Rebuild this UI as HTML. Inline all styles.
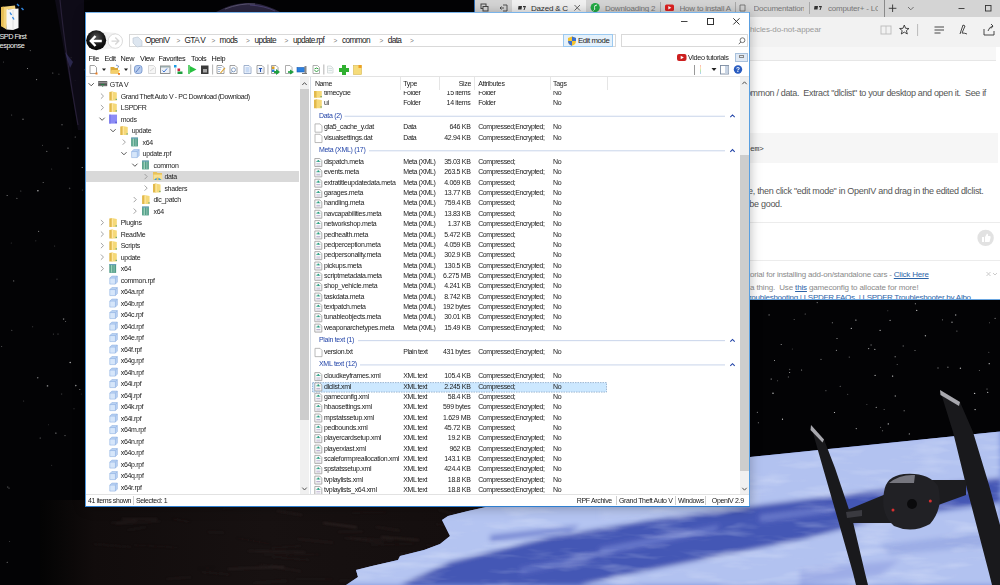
<!DOCTYPE html><html><head><meta charset="utf-8"><style>
html,body{margin:0;padding:0;width:1000px;height:585px;overflow:hidden;background:#030305;}
.t{position:absolute;white-space:nowrap;font-family:"Liberation Sans",sans-serif;}
svg{position:absolute;left:0;top:0;}
</style></head><body>
<svg width="1000" height="585" viewBox="0 0 1000 585">
<defs>
<linearGradient id="earth" x1="0" y1="0" x2="0.3" y2="1">
<stop offset="0" stop-color="#8a9ddc"/><stop offset="0.35" stop-color="#6f84cc"/><stop offset="1" stop-color="#8fa2df"/>
</linearGradient>
<filter id="bl" x="-20%" y="-20%" width="140%" height="140%"><feGaussianBlur stdDeviation="2.5"/></filter>
<filter id="turb" x="0" y="0" width="100%" height="100%"><feTurbulence type="fractalNoise" baseFrequency="0.02 0.1" numOctaves="3" seed="4"/><feColorMatrix type="matrix" values="0 0 0 0 0.9  0 0 0 0 0.93  0 0 0 0 1  0 0 0 2.2 -1.05"/></filter>
<filter id="bl2" x="-20%" y="-20%" width="140%" height="140%"><feGaussianBlur stdDeviation="1.2"/></filter>
</defs>
<rect width="1000" height="585" fill="#030305"/>
<circle cx="832.3" cy="322.8" r="0.5" fill="#fff" opacity="0.66"/><circle cx="955.7" cy="315.0" r="0.7" fill="#fff" opacity="0.62"/><circle cx="805.2" cy="313.9" r="0.5" fill="#fff" opacity="0.53"/><circle cx="774.5" cy="360.6" r="0.5" fill="#fff" opacity="0.75"/><circle cx="987.0" cy="389.0" r="0.5" fill="#fff" opacity="0.62"/><circle cx="895.1" cy="356.7" r="0.5" fill="#fff" opacity="0.84"/><circle cx="890.1" cy="320.4" r="0.7" fill="#fff" opacity="0.53"/><circle cx="781.2" cy="344.6" r="0.5" fill="#fff" opacity="0.75"/><circle cx="777.6" cy="380.8" r="0.5" fill="#fff" opacity="0.40"/><circle cx="887.8" cy="310.7" r="0.5" fill="#fff" opacity="0.33"/><circle cx="875.1" cy="375.4" r="0.6" fill="#fff" opacity="0.73"/><circle cx="897.2" cy="364.5" r="0.5" fill="#fff" opacity="0.46"/><circle cx="925.4" cy="335.7" r="0.7" fill="#fff" opacity="0.62"/><circle cx="874.8" cy="349.4" r="0.7" fill="#fff" opacity="0.55"/><circle cx="995.1" cy="318.3" r="0.6" fill="#fff" opacity="0.53"/><circle cx="789.7" cy="369.5" r="0.7" fill="#fff" opacity="0.32"/><circle cx="771.2" cy="379.0" r="0.6" fill="#fff" opacity="0.73"/><circle cx="836.4" cy="350.3" r="0.6" fill="#fff" opacity="0.57"/><circle cx="769.1" cy="314.9" r="0.7" fill="#fff" opacity="0.45"/><circle cx="916.7" cy="310.4" r="0.7" fill="#fff" opacity="0.69"/><circle cx="895.3" cy="396.0" r="0.7" fill="#fff" opacity="0.55"/><circle cx="847.7" cy="394.3" r="0.6" fill="#fff" opacity="0.31"/><circle cx="840.2" cy="386.3" r="0.5" fill="#fff" opacity="0.57"/><circle cx="942.5" cy="319.8" r="0.6" fill="#fff" opacity="0.44"/><circle cx="979.4" cy="370.5" r="0.6" fill="#fff" opacity="0.39"/><circle cx="888.3" cy="423.9" r="0.7" fill="#fff" opacity="0.75"/><circle cx="821.0" cy="359.3" r="0.6" fill="#fff" opacity="0.50"/><circle cx="989.5" cy="322.8" r="0.5" fill="#fff" opacity="0.40"/><circle cx="915.3" cy="303.7" r="0.5" fill="#fff" opacity="0.76"/><circle cx="817.2" cy="302.6" r="0.6" fill="#fff" opacity="0.53"/><circle cx="903.2" cy="346.0" r="0.7" fill="#fff" opacity="0.37"/><circle cx="987.7" cy="392.4" r="0.6" fill="#fff" opacity="0.71"/><circle cx="975.1" cy="409.6" r="0.7" fill="#fff" opacity="0.78"/><circle cx="849.3" cy="357.1" r="0.7" fill="#fff" opacity="0.36"/><circle cx="851.3" cy="328.3" r="0.6" fill="#fff" opacity="0.84"/><circle cx="792.3" cy="348.9" r="0.5" fill="#fff" opacity="0.33"/><circle cx="892.6" cy="376.1" r="0.7" fill="#fff" opacity="0.82"/><circle cx="758.3" cy="422.7" r="0.5" fill="#fff" opacity="0.64"/><circle cx="909.3" cy="433.9" r="0.6" fill="#fff" opacity="0.63"/><circle cx="782.5" cy="419.2" r="0.6" fill="#fff" opacity="0.85"/><circle cx="871.1" cy="345.0" r="0.7" fill="#fff" opacity="0.38"/><circle cx="837.0" cy="338.5" r="0.5" fill="#fff" opacity="0.76"/><circle cx="880.1" cy="330.3" r="0.6" fill="#fff" opacity="0.82"/><circle cx="788.4" cy="377.0" r="0.7" fill="#fff" opacity="0.31"/><circle cx="825.9" cy="390.7" r="0.6" fill="#fff" opacity="0.35"/><circle cx="880.6" cy="427.3" r="0.5" fill="#fff" opacity="0.50"/><circle cx="884.1" cy="409.5" r="0.5" fill="#fff" opacity="0.48"/><circle cx="904.1" cy="410.8" r="0.5" fill="#fff" opacity="0.72"/><circle cx="951.9" cy="414.9" r="0.5" fill="#fff" opacity="0.71"/><circle cx="801.6" cy="370.0" r="0.5" fill="#fff" opacity="0.70"/><circle cx="947.9" cy="367.2" r="0.7" fill="#fff" opacity="0.41"/><circle cx="989.2" cy="363.7" r="0.6" fill="#fff" opacity="0.82"/><circle cx="988.8" cy="352.3" r="0.5" fill="#fff" opacity="0.42"/><circle cx="868.6" cy="348.6" r="0.7" fill="#fff" opacity="0.57"/><circle cx="960.4" cy="368.2" r="0.7" fill="#fff" opacity="0.66"/><circle cx="773.0" cy="393.2" r="0.7" fill="#fff" opacity="0.80"/><circle cx="938.0" cy="368.0" r="0.7" fill="#fff" opacity="0.40"/><circle cx="834.5" cy="412.5" r="0.6" fill="#fff" opacity="0.83"/><circle cx="866.9" cy="404.6" r="0.5" fill="#fff" opacity="0.35"/><circle cx="794.2" cy="319.5" r="0.6" fill="#fff" opacity="0.38"/><circle cx="952.0" cy="322.2" r="0.6" fill="#fff" opacity="0.75"/><circle cx="915.0" cy="350.4" r="0.5" fill="#fff" opacity="0.60"/><circle cx="757.3" cy="412.3" r="0.5" fill="#fff" opacity="0.70"/><circle cx="882.6" cy="430.8" r="0.5" fill="#fff" opacity="0.54"/><circle cx="956.9" cy="331.1" r="0.6" fill="#fff" opacity="0.44"/><circle cx="876.3" cy="407.4" r="0.7" fill="#fff" opacity="0.48"/><circle cx="855.9" cy="320.1" r="0.6" fill="#fff" opacity="0.80"/><circle cx="974.6" cy="393.4" r="0.7" fill="#fff" opacity="0.75"/><circle cx="856.3" cy="428.6" r="0.7" fill="#fff" opacity="0.58"/><circle cx="789.7" cy="372.5" r="0.5" fill="#fff" opacity="0.78"/><circle cx="51.7" cy="465.2" r="0.5" fill="#fff" opacity="0.23"/><circle cx="40.2" cy="438.0" r="0.6" fill="#fff" opacity="0.46"/><circle cx="58.0" cy="333.9" r="0.5" fill="#fff" opacity="0.42"/><circle cx="75.1" cy="80.4" r="0.5" fill="#fff" opacity="0.26"/><circle cx="65.6" cy="321.6" r="0.5" fill="#fff" opacity="0.46"/><circle cx="37.7" cy="377.7" r="0.8" fill="#fff" opacity="0.43"/><circle cx="16.9" cy="198.3" r="0.6" fill="#fff" opacity="0.43"/><circle cx="43.2" cy="182.5" r="0.6" fill="#fff" opacity="0.44"/><circle cx="78.4" cy="527.6" r="0.6" fill="#fff" opacity="0.26"/><circle cx="11.7" cy="115.1" r="0.5" fill="#fff" opacity="0.39"/><circle cx="57.0" cy="279.2" r="0.6" fill="#fff" opacity="0.27"/><circle cx="66.6" cy="529.9" r="0.8" fill="#fff" opacity="0.23"/><circle cx="54.7" cy="245.9" r="0.5" fill="#fff" opacity="0.29"/><circle cx="82.2" cy="167.5" r="0.6" fill="#fff" opacity="0.67"/><circle cx="75.2" cy="137.1" r="0.5" fill="#fff" opacity="0.52"/><circle cx="13.7" cy="280.9" r="0.6" fill="#fff" opacity="0.43"/><circle cx="35.8" cy="240.8" r="0.6" fill="#fff" opacity="0.20"/><circle cx="1.7" cy="346.4" r="0.5" fill="#fff" opacity="0.39"/><circle cx="32.7" cy="326.8" r="0.5" fill="#fff" opacity="0.31"/><circle cx="9.6" cy="541.4" r="0.5" fill="#fff" opacity="0.28"/><circle cx="7.1" cy="195.5" r="0.5" fill="#fff" opacity="0.65"/><circle cx="23.0" cy="119.3" r="0.8" fill="#fff" opacity="0.38"/><circle cx="69.6" cy="188.4" r="0.8" fill="#fff" opacity="0.23"/><circle cx="48.5" cy="424.7" r="0.5" fill="#fff" opacity="0.20"/><circle cx="68.0" cy="148.1" r="0.6" fill="#fff" opacity="0.64"/><circle cx="79.8" cy="389.4" r="0.5" fill="#fff" opacity="0.59"/><circle cx="51.7" cy="169.0" r="0.5" fill="#fff" opacity="0.30"/><circle cx="38.6" cy="231.4" r="0.6" fill="#fff" opacity="0.45"/><circle cx="52.8" cy="73.1" r="0.5" fill="#fff" opacity="0.54"/><circle cx="82.4" cy="190.1" r="0.6" fill="#fff" opacity="0.25"/><circle cx="53.4" cy="334.1" r="0.6" fill="#fff" opacity="0.26"/><circle cx="42.5" cy="145.2" r="0.5" fill="#fff" opacity="0.34"/><circle cx="84.5" cy="69.8" r="0.8" fill="#fff" opacity="0.16"/><circle cx="46.8" cy="151.4" r="0.6" fill="#fff" opacity="0.41"/><circle cx="9.0" cy="488.1" r="0.6" fill="#fff" opacity="0.39"/><circle cx="46.4" cy="525.5" r="0.6" fill="#fff" opacity="0.68"/><circle cx="58.5" cy="575.6" r="0.8" fill="#fff" opacity="0.34"/><circle cx="62.0" cy="124.7" r="0.5" fill="#fff" opacity="0.69"/><circle cx="71.1" cy="57.6" r="0.6" fill="#fff" opacity="0.49"/><circle cx="36.6" cy="79.6" r="0.6" fill="#fff" opacity="0.52"/><circle cx="74.0" cy="408.7" r="0.5" fill="#fff" opacity="0.31"/><circle cx="58.9" cy="74.2" r="0.6" fill="#fff" opacity="0.25"/><circle cx="37.9" cy="190.8" r="0.8" fill="#fff" opacity="0.68"/><circle cx="27.5" cy="68.4" r="0.5" fill="#fff" opacity="0.64"/><circle cx="30.3" cy="50.6" r="0.6" fill="#fff" opacity="0.36"/><circle cx="23.7" cy="401.0" r="0.5" fill="#fff" opacity="0.29"/><circle cx="7.7" cy="487.1" r="0.8" fill="#fff" opacity="0.23"/><circle cx="3.5" cy="62.0" r="0.5" fill="#fff" opacity="0.32"/><circle cx="7.2" cy="562.3" r="0.5" fill="#fff" opacity="0.62"/><circle cx="55.9" cy="433.1" r="0.6" fill="#fff" opacity="0.63"/><circle cx="65.0" cy="435.6" r="0.6" fill="#fff" opacity="0.42"/><circle cx="61.6" cy="394.1" r="0.8" fill="#fff" opacity="0.17"/><circle cx="75.8" cy="385.6" r="0.8" fill="#fff" opacity="0.55"/><circle cx="11.8" cy="330.2" r="0.5" fill="#fff" opacity="0.43"/><circle cx="70.2" cy="362.5" r="0.8" fill="#fff" opacity="0.64"/><circle cx="81.3" cy="393.9" r="0.5" fill="#fff" opacity="0.20"/><circle cx="11.3" cy="243.0" r="0.6" fill="#fff" opacity="0.21"/><circle cx="47.5" cy="385.9" r="0.8" fill="#fff" opacity="0.49"/><circle cx="20.8" cy="191.1" r="0.5" fill="#fff" opacity="0.40"/><circle cx="63.6" cy="319.1" r="0.8" fill="#fff" opacity="0.44"/>
<path d="M55 0 C62 40 70 80 78 130 L84 130 L84 0 Z" fill="#120e1c" opacity="0.8"/>
<path d="M60 0 C64 40 70 80 78 125" stroke="#2e2640" stroke-width="1.2" fill="none" opacity="0.8"/>
<path d="M65 52 L73 62 L70 68 Z" fill="#3e3a70" opacity="0.6"/>
<path d="M216 12 Q230 4 245 3 Q262 2 280 12 Z" fill="#2c2640"/>
<path d="M225 9 Q240 3 255 4" stroke="#6a6480" stroke-width="1" fill="none" opacity="0.7"/>
<path d="M250 5 Q265 6 275 11" stroke="#5a5090" stroke-width="1" fill="none" opacity="0.6"/>
<linearGradient id="hull" x1="0" y1="0" x2="1" y2="0"><stop offset="0" stop-color="#030303"/><stop offset="0.12" stop-color="#110c0c"/><stop offset="0.5" stop-color="#171111"/><stop offset="1" stop-color="#140e0e"/></linearGradient>
<path d="M40 500 L490 500 L486 507 L468 511 L448 516 L442 520 L450 536 L440 544 L424 550 L400 556 L398 560 L372 566 L356 570 L358 577 L346 585 L40 585 Z" fill="url(#hull)"/>
<g filter="url(#bl2)" opacity="0.8"><path d="M248 551 l57 1.2" stroke="#443636" stroke-width="1.2" opacity="0.46"/><path d="M371 545 l43 -1.3" stroke="#3a2e2e" stroke-width="1.1" opacity="0.30"/><path d="M298 539 l35 3.7" stroke="#3a2e2e" stroke-width="1.4" opacity="0.47"/><path d="M111 523 l26 -2.7" stroke="#443636" stroke-width="1.2" opacity="0.40"/><path d="M272 557 l37 3.0" stroke="#3a2e2e" stroke-width="1.1" opacity="0.35"/><path d="M338 532 l25 -0.4" stroke="#4a3a38" stroke-width="0.7" opacity="0.52"/><path d="M128 530 l18 -2.8" stroke="#3a2e2e" stroke-width="1.4" opacity="0.32"/><path d="M254 583 l33 -2.3" stroke="#2e2626" stroke-width="1.4" opacity="0.52"/><path d="M208 532 l16 0.7" stroke="#3a2e2e" stroke-width="1.7" opacity="0.30"/><path d="M94 544 l37 3.1" stroke="#443636" stroke-width="0.8" opacity="0.43"/><path d="M237 538 l33 5.9" stroke="#2e2626" stroke-width="0.6" opacity="0.55"/><path d="M439 510 l23 6.0" stroke="#3a2e2e" stroke-width="1.3" opacity="0.45"/><path d="M436 524 l27 4.0" stroke="#3a2e2e" stroke-width="1.0" opacity="0.35"/><path d="M116 524 l44 -2.9" stroke="#443636" stroke-width="1.0" opacity="0.47"/><path d="M426 545 l41 4.8" stroke="#443636" stroke-width="0.8" opacity="0.30"/><path d="M376 527 l24 3.7" stroke="#4a3a38" stroke-width="1.7" opacity="0.32"/><path d="M399 554 l34 -2.1" stroke="#443636" stroke-width="0.6" opacity="0.59"/><path d="M349 538 l34 5.1" stroke="#3a2e2e" stroke-width="1.2" opacity="0.43"/><path d="M134 545 l44 2.5" stroke="#443636" stroke-width="0.7" opacity="0.32"/><path d="M352 513 l34 -0.8" stroke="#443636" stroke-width="0.7" opacity="0.35"/><path d="M122 519 l35 -0.0" stroke="#443636" stroke-width="1.5" opacity="0.43"/><path d="M296 579 l36 0.2" stroke="#3a2e2e" stroke-width="1.0" opacity="0.26"/><path d="M259 564 l29 6.0" stroke="#3a2e2e" stroke-width="0.7" opacity="0.44"/><path d="M405 565 l47 4.1" stroke="#4a3a38" stroke-width="1.7" opacity="0.37"/><path d="M405 575 l34 4.1" stroke="#4a3a38" stroke-width="1.6" opacity="0.45"/><path d="M223 509 l18 -2.2" stroke="#4a3a38" stroke-width="0.7" opacity="0.34"/><path d="M345 538 l48 2.2" stroke="#3a2e2e" stroke-width="1.1" opacity="0.54"/><path d="M272 548 l29 -2.2" stroke="#3a2e2e" stroke-width="0.6" opacity="0.59"/><path d="M264 555 l56 -0.7" stroke="#443636" stroke-width="0.6" opacity="0.36"/><path d="M271 566 l30 5.4" stroke="#4a3a38" stroke-width="1.2" opacity="0.33"/><path d="M323 523 l34 4.3" stroke="#4a3a38" stroke-width="1.7" opacity="0.56"/><path d="M167 579 l24 -1.8" stroke="#3a2e2e" stroke-width="1.0" opacity="0.56"/><path d="M339 581 l27 -1.5" stroke="#443636" stroke-width="1.1" opacity="0.35"/><path d="M381 537 l38 3.0" stroke="#4a3a38" stroke-width="1.5" opacity="0.54"/><path d="M202 572 l28 2.5" stroke="#2e2626" stroke-width="1.4" opacity="0.35"/><path d="M198 569 l16 -1.8" stroke="#2e2626" stroke-width="1.1" opacity="0.26"/><path d="M173 519 l17 2.7" stroke="#2e2626" stroke-width="1.1" opacity="0.47"/><path d="M425 561 l24 1.3" stroke="#4a3a38" stroke-width="0.8" opacity="0.25"/><path d="M277 511 l25 4.0" stroke="#443636" stroke-width="1.2" opacity="0.58"/><path d="M228 569 l56 -2.2" stroke="#443636" stroke-width="1.7" opacity="0.50"/></g>
<clipPath id="ec"><path d="M1000 431.5 L750 457 L480 492 L486 507 L468 511 L448 516 L442 520 L450 536 L440 544 L424 550 L400 556 L398 560 L372 566 L356 570 L358 577 L346 585 L1000 585 Z"/></clipPath>
<path d="M1000 431.5 L750 457 L480 492 L486 507 L468 511 L448 516 L442 520 L450 536 L440 544 L424 550 L400 556 L398 560 L372 566 L356 570 L358 577 L346 585 L1000 585 Z" fill="#7f94dc"/>
<g clip-path="url(#ec)"><g filter="url(#bl)">
<path d="M600 470 L1000 428 L1000 482 L760 505 L600 520 Z" fill="#b8c6f2" opacity="0.9"/>
<path d="M330 500 L760 490 L760 505 L650 520 L550 537 L450 562 L400 585 L330 585 Z" fill="#b8c8f2" opacity="0.92"/>
<path d="M400 585 L450 562 L550 537 L650 520 L760 505 L880 490 L1000 478 L1000 502 L880 518 L800 540 L650 570 L580 585 Z" fill="#4152b2" opacity="0.95"/>
<path d="M580 585 L650 570 L800 540 L880 520 L1000 504 L1000 585 Z" fill="#b8c6f2" opacity="0.9"/>
<path d="M490 535 L580 525 L570 532 L490 542 Z" fill="#6070c8" opacity="0.7"/><path d="M600 548 L720 525 L715 531 L600 555 Z" fill="#7888d4" opacity="0.7"/><path d="M520 568 L600 552 L595 558 L520 574 Z" fill="#7080d0" opacity="0.6"/>
<path d="M760 515 L840 505 L830 512 L760 522 Z" fill="#8090d8" opacity="0.6"/>
<path d="M880 545 L1000 530 L1000 545 L890 555 Z" fill="#90a0e0" opacity="0.6"/>
<path d="M800 570 L900 560 L880 575 L800 585 Z" fill="#8a9ade" opacity="0.5"/>
</g><rect x="340" y="425" width="660" height="160" filter="url(#turb)" opacity="0.3"/></g>
<!-- TIE fighter -->
<g>
<path d="M811 425 L815 440 L823 468 L838 520 L853 573 L856 585 L868 585 L865 573 L852.5 520 L835 468 L824 439.5 Z" fill="#19191c"/>
<path d="M811 425 L824 439.5 L822.5 442.5 L810.5 430 Z" fill="#a8a8ae"/>
<path d="M940 390 L953 432 L966 485 L989 573 L992 585 L1000 585 L1000 525 L989 485 L973 432 L960 402 Z" fill="#19191c"/>
<path d="M940 390 L960 402 L959 406 L940.5 395 Z" fill="#a8a8ae"/>
<path d="M847 510 L886 494 L892 523 L850 523 Z" fill="#1c1c1f"/><path d="M846 512 L862 510 L862 516 L847 518 Z" fill="#3a3a40"/>
<path d="M926 480 L966 480 L966 495 L930 508 Z" fill="#1c1c1f"/>
<path d="M884 492 Q886 476 904 474 Q928 472 938 486 Q944 508 930 524 Q912 534 894 526 Q880 514 884 492 Z" fill="#212125"/>
<path d="M889 483 Q900 474 915 475 L914 483 Z" fill="#76767e"/>
<circle cx="912" cy="504" r="5" fill="#0a0a0c"/>
<circle cx="893" cy="510" r="1.5" fill="#d83030"/>
<circle cx="930.3" cy="501" r="1.5" fill="#d83030"/>
</g>
</svg>
<svg width="30" height="32" style="left:0;top:0" viewBox="0 0 30 32">
<path d="M1 7 L15 5.5 L15.5 9 L8 9.5 L6.5 29.5 L1 26 Z" fill="#f2d27a"/>
<path d="M1 7 L4 6.7 L3.5 27.5 L1 26 Z" fill="#e6bd55"/>
<path d="M6.5 9.5 L18.5 8.5 L18.5 28 L13 30 L6.5 29.5 Z" fill="#f6f6f6"/>
<path d="M13 10 L13 30" stroke="#d8d8d8" stroke-width="0.8"/>
<path d="M10 12.5 L11.5 15 M12.5 17 L14 19.5" stroke="#2f86e0" stroke-width="1.4"/>
<path d="M17 4 L19 6 M21.5 8 L23.5 10" stroke="#2f86e0" stroke-width="1.5"/>
</svg>
<div class="t" style="left:-0.50px;top:32.91px;font-size:7.3px;line-height:8.76px;color:#f4f4f4;letter-spacing:-0.5px;text-shadow:0 0 2px #000;">SPD First</div>
<div class="t" style="left:-0.50px;top:41.71px;font-size:7.3px;line-height:8.76px;color:#f4f4f4;letter-spacing:-0.4px;text-shadow:0 0 2px #000;">esponse</div>
<div style="position:absolute;left:0;top:0;width:1000px;height:300px;overflow:hidden">
<div style="position:absolute;left:474.00px;top:0.00px;width:526.00px;height:300.00px;background:#ffffff;"></div>
<div style="position:absolute;left:474.00px;top:0.00px;width:1.00px;height:300.00px;background:#2f6fb8;"></div>
<div style="position:absolute;left:475.00px;top:0.00px;width:525.00px;height:16.50px;background:#d4d4d4;"></div>
<div style="position:absolute;left:512.00px;top:0.00px;width:74.00px;height:16.50px;background:#f0f0f0;"></div>
<div style="position:absolute;left:475.00px;top:16.50px;width:525.00px;height:30.50px;background:#f2f2f2;"></div>
<div style="position:absolute;left:750.00px;top:47.00px;width:246.00px;height:13.00px;background:#f7f7f7;border-bottom:1px solid #e6e6e6;"></div>
<div style="position:absolute;left:660.00px;top:2.00px;width:1.00px;height:12.00px;background:#a8a8a8;"></div>
<div style="position:absolute;left:735.00px;top:2.00px;width:1.00px;height:12.00px;background:#a8a8a8;"></div>
<div style="position:absolute;left:808.50px;top:2.00px;width:1.00px;height:12.00px;background:#a8a8a8;"></div>
<div style="position:absolute;left:883.50px;top:0.00px;width:1.00px;height:16.50px;background:#8a8a8a;"></div>
<div class="t" style="left:531.00px;top:3.72px;font-size:8px;line-height:9.60px;color:#333;letter-spacing:-0.2px;width:37px;overflow:hidden;">Dazed &amp; Co</div>
<div style="position:absolute;left:586.00px;top:0.00px;width:0.00px;height:0.00px;"></div>
<div class="t" style="left:605.00px;top:3.72px;font-size:8px;line-height:9.60px;color:#777;letter-spacing:-0.2px;">Downloading 2</div>
<div class="t" style="left:679.50px;top:3.72px;font-size:8px;line-height:9.60px;color:#777;letter-spacing:-0.2px;width:53px;overflow:hidden;">How to install A</div>
<div class="t" style="left:753.50px;top:3.72px;font-size:8px;line-height:9.60px;color:#777;letter-spacing:-0.2px;width:50px;overflow:hidden;">Documentation</div>
<div class="t" style="left:828.00px;top:3.72px;font-size:8px;line-height:9.60px;color:#777;letter-spacing:-0.2px;width:50px;overflow:hidden;">computer+ - LC</div>
<svg width="1000" height="20" viewBox="0 0 1000 20" style="left:0;top:0"><circle cx="595.2" cy="7.6" r="4.6" fill="#22aa44"/><path d="M597 5 Q594 5 594.5 7.5 Q595.5 9.5 593.5 10.5" stroke="#fff" stroke-width="0.9" fill="none"/><rect x="665" y="4.5" width="9" height="6.5" rx="1.5" fill="#dd2020"/><path d="M668.3 6 L671.3 7.75 L668.3 9.5 Z" fill="#fff"/><path d="M574.5 5 L580 10.5 M580 5 L574.5 10.5" stroke="#555" stroke-width="0.9"/><rect x="481" y="4" width="5" height="4.5" fill="none" stroke="#444" stroke-width="1"/><rect x="483" y="6.5" width="5" height="4.5" fill="#d6d6d6" stroke="#444" stroke-width="1"/><path d="M500 8 L504 8 M501.5 6.5 L500 8 L501.5 9.5 M503 5 L507 5 L507 11 L503 11" stroke="#444" stroke-width="0.9" fill="none"/><path d="M518.5 6 L522 6 L521.5 9.5 L518 9.5 Z M523 6 L526 6 L524.5 10 L523.5 10 L524.5 7.2 L523 7.2 Z" fill="#333"/><path d="M740 5 L745 5 L745 11 L740 11 Z" fill="none" stroke="#666" stroke-width="0.8"/><path d="M814.5 6 L818 6 L817.5 9.5 L814 9.5 Z M819 6 L822 6 L820.5 10 L819.5 10 L820.5 7.2 L819 7.2 Z" fill="#333"/><path d="M892.6 4.5 L892.6 12 M888.8 8.3 L896.4 8.3" stroke="#333" stroke-width="0.9"/><path d="M908 7 L910.8 9.8 L913.6 7" stroke="#555" stroke-width="0.8" fill="none"/><path d="M958.5 8.5 L964.5 8.5" stroke="#333" stroke-width="0.9"/><rect x="985.5" y="5.5" width="5.5" height="5.5" fill="none" stroke="#333" stroke-width="0.9"/></svg>
<div class="t" style="right:179.00px;top:25.42px;font-size:8px;line-height:9.60px;color:#9a9a9a;letter-spacing:-0.12px;text-align:right;">added-vehicles-do-not-appear</div>
<svg width="1000" height="50" viewBox="0 0 1000 50" style="left:0;top:0"><rect x="881" y="26" width="10" height="8" fill="none" stroke="#bbb" stroke-width="0.9"/><path d="M886 26 L886 34" stroke="#bbb" stroke-width="0.8"/><path d="M904.3 25 L905.6 28.3 L909 28.5 L906.4 30.6 L907.3 34 L904.3 32.1 L901.3 34 L902.2 30.6 L899.6 28.5 L903 28.3 Z" fill="none" stroke="#333" stroke-width="0.9"/><path d="M917.6 24 L917.6 36" stroke="#aaa" stroke-width="0.8"/><path d="M934.5 27 L944 27 M934.5 30 L944 30 M934.5 33 L940.5 33" stroke="#333" stroke-width="0.9"/><path d="M960 34 L963 25 L965 26 L962 33 Q965 33 967 34" stroke="#333" stroke-width="0.9" fill="none"/><path d="M984 29 L984 35 L994 35 L994 31 M988 31 Q989 27 993 26 L991 24 M993 26 L991 28.5" stroke="#333" stroke-width="0.9" fill="none"/></svg>
<div class="t" style="right:14.00px;top:88.16px;font-size:9px;line-height:10.80px;color:#555;letter-spacing:-0.34px;text-align:right;">update.rpf / common / data.&nbsp; Extract "dlclist" to your desktop and open it.&nbsp; See if</div>
<div style="position:absolute;left:750.00px;top:132.50px;width:248.00px;height:30.00px;background:#f6f6f6;"></div>
<div class="t" style="left:750.00px;top:143.52px;font-size:8px;line-height:9.60px;color:#444;letter-spacing:-0.3px;font-family:'Liberation Mono',monospace;">em&gt;</div>
<div class="t" style="right:16.50px;top:185.76px;font-size:9px;line-height:10.80px;color:#555;letter-spacing:-0.3px;text-align:right;">file, then click "edit mode" in OpenIV and drag in the edited dlclist.</div>
<div class="t" style="right:218.00px;top:198.96px;font-size:9px;line-height:10.80px;color:#555;letter-spacing:-0.3px;text-align:right;">should be good.</div>
<div style="position:absolute;left:750.00px;top:222.00px;width:250.00px;height:1.00px;background:#ececec;"></div>
<div style="position:absolute;left:750.00px;top:259.50px;width:250.00px;height:1.00px;background:#ececec;"></div>
<svg width="20" height="20" viewBox="0 0 20 20" style="left:976px;top:228px"><circle cx="9.6" cy="9.9" r="8.2" fill="#e2e2e2"/><path d="M6 9 L8 9 L8 14 L6 14 Z M9 9 L11 5.5 Q12.5 5.5 12 8 L14 8 Q15 8.5 14.5 10 L13.5 14 L9 14 Z" fill="#fff"/></svg>
<div class="t" style="right:71.30px;top:270.32px;font-size:8px;line-height:9.60px;color:#8a8a8a;letter-spacing:-0.2px;text-align:right;">Tutorial for installing add-on/standalone cars - <span style="color:#2d64a8;text-decoration:underline">Click Here</span></div>
<div class="t" style="right:81.50px;top:282.62px;font-size:8px;line-height:9.60px;color:#8a8a8a;letter-spacing:-0.15px;text-align:right;">is a thing.&nbsp; Use <span style="color:#2d64a8;text-decoration:underline">this</span> gameconfig to allocate for more!</div>
<div class="t" style="right:29.20px;top:293.02px;font-size:8px;line-height:9.60px;color:#2d64a8;letter-spacing:-0.25px;text-align:right;text-decoration:underline;">Troubleshooting | LSPDFR FAQs&nbsp; | LSPDFR Troubleshooter by Albo</div>
<svg width="20" height="12" viewBox="0 0 20 12" style="left:982px;top:268px"><path d="M4.5 4 L8.5 8 M8.5 4 L4.5 8" stroke="#ccc" stroke-width="1"/><path d="M11 5 L13 7 L15 5" stroke="#ccc" fill="none"/></svg>
<div style="position:absolute;left:474.00px;top:299.00px;width:526.00px;height:1.00px;background:#6aa6e0;"></div>
</div>
<div style="position:absolute;left:0;top:0;width:1000px;height:585px;">
<div style="position:absolute;left:85.00px;top:12.00px;width:665.00px;height:495.00px;background:#ffffff;box-shadow:0 1px 11px rgba(0,0,0,0.28);"></div>
<div style="position:absolute;left:85.00px;top:12.00px;width:665.00px;height:1.00px;background:#7ab4ea;"></div>
<div style="position:absolute;left:85.00px;top:12.00px;width:1.00px;height:495.00px;background:#4f98de;"></div>
<div style="position:absolute;left:749.00px;top:12.00px;width:1.00px;height:495.00px;background:#5a9fe0;"></div>
<div style="position:absolute;left:85.00px;top:506.00px;width:665.00px;height:1.00px;background:#2f7fd0;"></div>
<svg width="1000" height="60" viewBox="0 0 1000 60" style="left:0;top:0"><path d="M681 21.5 L687.5 21.5" stroke="#444" stroke-width="1"/><rect x="707.5" y="18.5" width="6" height="6" fill="none" stroke="#333" stroke-width="1"/><path d="M733.3 18.3 L739.5 24.5 M739.5 18.3 L733.3 24.5" stroke="#333" stroke-width="1"/><defs><radialGradient id="bk" cx="0.5" cy="0.35" r="0.7"><stop offset="0" stop-color="#555"/><stop offset="0.6" stop-color="#111"/><stop offset="1" stop-color="#000"/></radialGradient></defs><path d="M100 31.5 L116 33 L116 48 L100 50 Z" fill="#e8e8e8" opacity="0.6"/><circle cx="115.3" cy="41.1" r="7.2" fill="#fff" stroke="#d2d2d2" stroke-width="0.8"/><path d="M111.5 41.1 L118.5 41.1 M115.3 37.6 L118.8 41.1 L115.3 44.6" stroke="#d6d6d6" stroke-width="1.4" fill="none"/><circle cx="96.2" cy="40.3" r="10" fill="url(#bk)"/><path d="M90.8 41 L101.8 41 M95.5 36 L90.8 41 L95.5 46" stroke="#fff" stroke-width="2.4" fill="none"/></svg>
<div style="position:absolute;left:129.00px;top:34.00px;width:486.00px;height:12.00px;background:#fff;border:1px solid #d9d9d9;box-sizing:border-box;width:487px;height:13px;"></div>
<svg width="12" height="12" viewBox="0 0 12 12" style="left:132px;top:36px"><path d="M1 2 L6 1 L10 5 L10 10 L5 11 L1 7 Z" fill="#dde6f0" stroke="#b8c4d0" stroke-width="0.6"/></svg>
<div class="t" style="left:145.00px;top:36.15px;font-size:8.3px;line-height:9.96px;color:#222;letter-spacing:-0.62px;">OpenIV</div>
<div class="t" style="left:176.60px;top:37.16px;font-size:6.5px;line-height:7.80px;color:#777;letter-spacing:0px;">&gt;</div>
<div class="t" style="left:184.50px;top:36.15px;font-size:8.3px;line-height:9.96px;color:#222;letter-spacing:-0.62px;">GTA V</div>
<div class="t" style="left:211.40px;top:37.16px;font-size:6.5px;line-height:7.80px;color:#777;letter-spacing:0px;">&gt;</div>
<div class="t" style="left:219.60px;top:36.15px;font-size:8.3px;line-height:9.96px;color:#222;letter-spacing:-0.62px;">mods</div>
<div class="t" style="left:246.00px;top:37.16px;font-size:6.5px;line-height:7.80px;color:#777;letter-spacing:0px;">&gt;</div>
<div class="t" style="left:254.40px;top:36.15px;font-size:8.3px;line-height:9.96px;color:#222;letter-spacing:-0.62px;">update</div>
<div class="t" style="left:284.60px;top:37.16px;font-size:6.5px;line-height:7.80px;color:#777;letter-spacing:0px;">&gt;</div>
<div class="t" style="left:293.00px;top:36.15px;font-size:8.3px;line-height:9.96px;color:#222;letter-spacing:-0.62px;">update.rpf</div>
<div class="t" style="left:333.50px;top:37.16px;font-size:6.5px;line-height:7.80px;color:#777;letter-spacing:0px;">&gt;</div>
<div class="t" style="left:342.00px;top:36.15px;font-size:8.3px;line-height:9.96px;color:#222;letter-spacing:-0.62px;">common</div>
<div class="t" style="left:379.40px;top:37.16px;font-size:6.5px;line-height:7.80px;color:#777;letter-spacing:0px;">&gt;</div>
<div class="t" style="left:387.70px;top:36.15px;font-size:8.3px;line-height:9.96px;color:#222;letter-spacing:-0.62px;">data</div>
<div class="t" style="left:410.00px;top:37.16px;font-size:6.5px;line-height:7.80px;color:#777;letter-spacing:0px;">&gt;</div>
<div style="position:absolute;left:563.00px;top:34.00px;width:50.00px;height:12.00px;background:#e5f1fb;border:1px solid #9cc9ef;box-sizing:border-box;height:12.5px;"></div>
<svg width="10" height="10" viewBox="0 0 10 10" style="left:567px;top:35.5px"><path d="M5 0.5 L9 2 L9 5 Q9 8.5 5 9.8 Q1 8.5 1 5 L1 2 Z" fill="#f4c430"/><path d="M5 0.5 L9 2 L9 5 L5 5 Z" fill="#3a6fd0"/><path d="M1 5 L5 5 L5 9.8 Q1 8.5 1 5 Z" fill="#3a6fd0"/></svg>
<div class="t" style="left:578.00px;top:36.23px;font-size:7.8px;line-height:9.36px;color:#222;letter-spacing:-0.42px;">Edit mode</div>
<div style="position:absolute;left:621.00px;top:34.00px;width:127.00px;height:12.00px;background:#fff;border:1px solid #d9d9d9;box-sizing:border-box;height:12.5px;"></div>
<svg width="10" height="10" viewBox="0 0 10 10" style="left:737px;top:35.5px"><circle cx="5.5" cy="4.2" r="2.4" fill="none" stroke="#666" stroke-width="0.9"/><path d="M3.8 6 L1.8 8.2" stroke="#666" stroke-width="1"/></svg>
<div class="t" style="left:88.50px;top:54.71px;font-size:7.3px;line-height:8.76px;color:#111;letter-spacing:-0.35px;">File</div>
<div class="t" style="left:104.40px;top:54.71px;font-size:7.3px;line-height:8.76px;color:#111;letter-spacing:-0.35px;">Edit</div>
<div class="t" style="left:120.60px;top:54.71px;font-size:7.3px;line-height:8.76px;color:#111;letter-spacing:-0.35px;">New</div>
<div class="t" style="left:140.00px;top:54.71px;font-size:7.3px;line-height:8.76px;color:#111;letter-spacing:-0.35px;">View</div>
<div class="t" style="left:158.40px;top:54.71px;font-size:7.3px;line-height:8.76px;color:#111;letter-spacing:-0.35px;">Favorites</div>
<div class="t" style="left:191.10px;top:54.71px;font-size:7.3px;line-height:8.76px;color:#111;letter-spacing:-0.35px;">Tools</div>
<div class="t" style="left:211.50px;top:54.71px;font-size:7.3px;line-height:8.76px;color:#111;letter-spacing:-0.35px;">Help</div>
<svg width="12" height="10" viewBox="0 0 12 10" style="left:677px;top:53px"><rect x="0" y="1" width="9.5" height="7" rx="2" fill="#cc1f1f"/><path d="M3.7 2.8 L6.8 4.5 L3.7 6.2 Z" fill="#fff"/></svg>
<div class="t" style="left:688.00px;top:53.51px;font-size:7.3px;line-height:8.76px;color:#222;letter-spacing:-0.38px;">Video tutorials</div>
<div style="position:absolute;left:735.00px;top:52.50px;width:13.00px;height:9.00px;background:#dfe9f5;border:1px solid #a7c0dc;box-sizing:border-box;"></div>
<div style="position:absolute;left:739.00px;top:55.00px;width:5.00px;height:3.00px;border:1px solid #888;box-sizing:border-box;"></div>
<div style="position:absolute;left:693.50px;top:64.50px;width:1.00px;height:10.00px;background:#999;"></div>
<div style="position:absolute;left:700.00px;top:65.00px;width:1.00px;height:9.00px;background:linear-gradient(#f66,#fc6,#6c6,#69f);opacity:0.5;"></div>
<svg width="50" height="12" viewBox="0 0 50 12" style="left:710px;top:64px"><path d="M1.5 4 L6.5 4 L4 7 Z" fill="#222"/><rect x="10.5" y="1.5" width="8" height="8.5" fill="#fff" stroke="#7a8aa0" stroke-width="0.9"/><rect x="15" y="2" width="3.5" height="7.5" fill="#c8d4e4"/><circle cx="28" cy="5.5" r="4.2" fill="#2a5cc0"/><text x="28" y="7.8" font-size="6.5" font-family="Liberation Sans" font-weight="bold" fill="#fff" text-anchor="middle">?</text></svg>
</div>
<svg width="1000" height="80" viewBox="0 0 1000 80" style="left:0;top:0"><g transform="translate(89.5,65)"><path d="M0.5 0.5 L5.0 0.5 L7.0 2.5 L7.0 8.5 L0.5 8.5 Z" fill="#fff" stroke="#8a8a8a" stroke-width="0.8"/><rect x="6" y="7.5" width="2" height="2" fill="#f08020"/></g><path d="M102 68.5 L106 68.5 L104 71 Z" fill="#222"/><path d="M110.5 67 L114 67 L115 68 L118 68 L118 73.5 L110.5 73.5 Z" fill="#d9a93a"/><path d="M111.5 70 L120 70 L118.5 73.5 L110.5 73.5 Z" fill="#f4cf6a"/><path d="M116 65 L119 66.5 L117.5 67.5" stroke="#5a7fc0" stroke-width="0.8" fill="none"/><rect x="118" y="73" width="2" height="1.8" fill="#f08020"/><path d="M124 68.5 L128 68.5 L126 71 Z" fill="#222"/><rect x="130.3" y="64.5" width="0.9" height="10" fill="#aaa"/><rect x="134.5" y="65.5" width="7.5" height="8" rx="2.5" fill="#b7cdf0" stroke="#6e8fc8" stroke-width="0.8"/><path d="M136 72 L140 67" stroke="#4a6ab0" stroke-width="0.8"/><g transform="translate(148,65)"><path d="M0.5 0.5 L5.5 0.5 L7.5 2.5 L7.5 8.5 L0.5 8.5 Z" fill="#f6f6f6" stroke="#d0d0d0" stroke-width="0.8"/><path d="M2 6 L6 3" stroke="#ccc" stroke-width="0.8"/></g><rect x="160.5" y="66" width="9.5" height="7.5" fill="#eef2f8" stroke="#777" stroke-width="0.8"/><rect x="160.5" y="66" width="9.5" height="1.5" fill="#9aa"/><path d="M162.5 70.5 L164 72 L167 68.5" stroke="#2a6ad0" stroke-width="0.9" fill="none"/><rect x="174" y="65" width="2.5" height="2.5" fill="#1a9ae0"/><rect x="175" y="68" width="1" height="6" fill="#ddd"/><rect x="177.5" y="68.5" width="2.6" height="2.6" fill="#d02040"/><rect x="177.5" y="71.5" width="5" height="2.5" fill="#20a040"/><path d="M188 65 L196.5 69.5 L188 74 Z" fill="#28c040"/><rect x="188" y="65" width="2" height="9" fill="#60d070"/><rect x="201" y="65.5" width="7.5" height="8.5" fill="#3a3a3a"/><rect x="203" y="69" width="4" height="3.5" fill="#eee" opacity="0.6"/><rect x="212.2" y="64.5" width="0.9" height="10" fill="#aaa"/><g transform="translate(216.5,65)"><path d="M0.5 0.5 L5.5 0.5 L7.5 2.5 L7.5 8.5 L0.5 8.5 Z" fill="#fff" stroke="#8a8a8a" stroke-width="0.8"/><path d="M1.5 2.5 L5 2.5 M1.5 4.5 L4 4.5 M1.5 6.5 L3.5 6.5" stroke="#7a9ac0" stroke-width="0.7"/><path d="M4 8 L8.5 3" stroke="#e0a020" stroke-width="1.1"/></g><g transform="translate(229.5,65)"><path d="M0.5 0.5 L5.5 0.5 L7.5 2.5 L7.5 8.5 L0.5 8.5 Z" fill="#fff" stroke="#8a8a8a" stroke-width="0.8"/><circle cx="4" cy="4.8" r="2" fill="none" stroke="#6a8ab8" stroke-width="0.8"/><path d="M2.5 6.5 L1 8" stroke="#6a8ab8" stroke-width="0.9"/></g><g transform="translate(243.5,65)"><path d="M0.5 0.5 L5.5 0.5 L7.5 2.5 L7.5 8.5 L0.5 8.5 Z" fill="#f4f8ff" stroke="#8aa0c0" stroke-width="0.8"/><rect x="2" y="2" width="4" height="5.5" fill="#c8daf4"/></g><g transform="translate(256.5,65)"><path d="M0.5 0.5 L5.5 0.5 L7.5 2.5 L7.5 8.5 L0.5 8.5 Z" fill="#fff" stroke="#8a8a8a" stroke-width="0.8"/><rect x="1.5" y="2.5" width="5" height="5" fill="#e4ecfa"/><path d="M2.5 3.5 L5.5 3.5 M4 3.5 L4 7" stroke="#2050b0" stroke-width="1"/></g><rect x="267.5" y="64.5" width="0.9" height="10" fill="#aaa"/><g transform="translate(271,65)"><path d="M0.5 0.5 L5.0 0.5 L7.0 2.5 L7.0 8.5 L0.5 8.5 Z" fill="#fff" stroke="#8a8a8a" stroke-width="0.8"/><rect x="1" y="1.5" width="2.5" height="2.5" fill="#e0a020"/><rect x="1" y="4.5" width="2.5" height="2.5" fill="#2a7ad0"/></g><path d="M276 69 L280 72 L276 75 Z" fill="#20a040"/><rect x="274" y="71" width="3" height="2" fill="#20a040"/><g transform="translate(285,65)"><path d="M0.5 0.5 L5.0 0.5 L7.0 2.5 L7.0 8.5 L0.5 8.5 Z" fill="#fff" stroke="#999" stroke-width="0.8"/></g><path d="M290 69.5 L294 72 L290 74.5 Z" fill="#20a040"/><rect x="288" y="71.2" width="3" height="1.6" fill="#20a040"/><rect x="297" y="67.5" width="7.5" height="4.5" fill="#2a80e0" stroke="#1a5ab0" stroke-width="0.6"/><rect x="304.5" y="66" width="2" height="8" fill="#8a8a8a"/><rect x="302" y="73" width="5" height="1" fill="#777"/><g transform="translate(312.5,65)"><path d="M0.5 0.5 L5.0 0.5 L7.0 2.5 L7.0 8.5 L0.5 8.5 Z" fill="#fff" stroke="#999" stroke-width="0.8"/><path d="M2 4 Q4 2 6 4 M6 5.5 Q4 7.5 2 5.5" stroke="#30a040" stroke-width="1" fill="none"/></g><rect x="323.4" y="64.5" width="0.9" height="10" fill="#aaa"/><g transform="translate(327,65.5)"><path d="M0.5 0.5 L4.0 0.5 L6.0 2.5 L6.0 7.5 L0.5 7.5 Z" fill="#f6f8f8" stroke="#cfd6d6" stroke-width="0.8"/><path d="M1.5 3 L5 3 M1.5 5 L5 5" stroke="#c8d8d8" stroke-width="0.7"/></g><path d="M342 65 L346 65 L346 68 L349 68 L349 72 L346 72 L346 75 L342 75 L342 72 L339 72 L339 68 L342 68 Z" fill="#30b030"/><rect x="353.5" y="65.5" width="8" height="9" fill="#f6dc7a" stroke="#d8b850" stroke-width="0.6"/><rect x="358.5" y="65" width="3" height="3" fill="#f0a020"/></svg>
<div style="position:absolute;left:86.00px;top:76.00px;width:663.00px;height:1.00px;background:#e3e3e3;"></div>
<div style="position:absolute;left:86.00px;top:171.00px;width:213.00px;height:11.20px;background:#d9d9d9;"></div>
<div class="t" style="left:109.80px;top:81.18px;font-size:7px;line-height:8.40px;color:#1a1a1a;letter-spacing:-0.3px;">GTA V</div>
<div class="t" style="left:120.72px;top:92.68px;font-size:7px;line-height:8.40px;color:#1a1a1a;letter-spacing:-0.41px;">Grand Theft Auto V - PC Download (Download)</div>
<div class="t" style="left:120.72px;top:104.18px;font-size:7px;line-height:8.40px;color:#1a1a1a;letter-spacing:-0.3px;">LSPDFR</div>
<div class="t" style="left:120.72px;top:115.68px;font-size:7px;line-height:8.40px;color:#1a1a1a;letter-spacing:-0.3px;">mods</div>
<div class="t" style="left:131.64px;top:127.18px;font-size:7px;line-height:8.40px;color:#1a1a1a;letter-spacing:-0.3px;">update</div>
<div class="t" style="left:142.56px;top:138.68px;font-size:7px;line-height:8.40px;color:#1a1a1a;letter-spacing:-0.3px;">x64</div>
<div class="t" style="left:142.56px;top:150.18px;font-size:7px;line-height:8.40px;color:#1a1a1a;letter-spacing:-0.3px;">update.rpf</div>
<div class="t" style="left:153.48px;top:161.68px;font-size:7px;line-height:8.40px;color:#1a1a1a;letter-spacing:-0.3px;">common</div>
<div class="t" style="left:164.40px;top:173.18px;font-size:7px;line-height:8.40px;color:#1a1a1a;letter-spacing:-0.3px;">data</div>
<div class="t" style="left:164.40px;top:184.68px;font-size:7px;line-height:8.40px;color:#1a1a1a;letter-spacing:-0.3px;">shaders</div>
<div class="t" style="left:153.48px;top:196.18px;font-size:7px;line-height:8.40px;color:#1a1a1a;letter-spacing:-0.3px;">dlc_patch</div>
<div class="t" style="left:153.48px;top:207.68px;font-size:7px;line-height:8.40px;color:#1a1a1a;letter-spacing:-0.3px;">x64</div>
<div class="t" style="left:120.72px;top:219.18px;font-size:7px;line-height:8.40px;color:#1a1a1a;letter-spacing:-0.3px;">Plugins</div>
<div class="t" style="left:120.72px;top:230.68px;font-size:7px;line-height:8.40px;color:#1a1a1a;letter-spacing:-0.3px;">ReadMe</div>
<div class="t" style="left:120.72px;top:242.18px;font-size:7px;line-height:8.40px;color:#1a1a1a;letter-spacing:-0.3px;">Scripts</div>
<div class="t" style="left:120.72px;top:253.68px;font-size:7px;line-height:8.40px;color:#1a1a1a;letter-spacing:-0.3px;">update</div>
<div class="t" style="left:120.72px;top:265.18px;font-size:7px;line-height:8.40px;color:#1a1a1a;letter-spacing:-0.3px;">x64</div>
<div class="t" style="left:120.72px;top:276.68px;font-size:7px;line-height:8.40px;color:#1a1a1a;letter-spacing:-0.3px;">common.rpf</div>
<div class="t" style="left:120.72px;top:288.18px;font-size:7px;line-height:8.40px;color:#1a1a1a;letter-spacing:-0.3px;">x64a.rpf</div>
<div class="t" style="left:120.72px;top:299.68px;font-size:7px;line-height:8.40px;color:#1a1a1a;letter-spacing:-0.3px;">x64b.rpf</div>
<div class="t" style="left:120.72px;top:311.18px;font-size:7px;line-height:8.40px;color:#1a1a1a;letter-spacing:-0.3px;">x64c.rpf</div>
<div class="t" style="left:120.72px;top:322.68px;font-size:7px;line-height:8.40px;color:#1a1a1a;letter-spacing:-0.3px;">x64d.rpf</div>
<div class="t" style="left:120.72px;top:334.18px;font-size:7px;line-height:8.40px;color:#1a1a1a;letter-spacing:-0.3px;">x64e.rpf</div>
<div class="t" style="left:120.72px;top:345.68px;font-size:7px;line-height:8.40px;color:#1a1a1a;letter-spacing:-0.3px;">x64f.rpf</div>
<div class="t" style="left:120.72px;top:357.18px;font-size:7px;line-height:8.40px;color:#1a1a1a;letter-spacing:-0.3px;">x64g.rpf</div>
<div class="t" style="left:120.72px;top:368.68px;font-size:7px;line-height:8.40px;color:#1a1a1a;letter-spacing:-0.3px;">x64h.rpf</div>
<div class="t" style="left:120.72px;top:380.18px;font-size:7px;line-height:8.40px;color:#1a1a1a;letter-spacing:-0.3px;">x64i.rpf</div>
<div class="t" style="left:120.72px;top:391.68px;font-size:7px;line-height:8.40px;color:#1a1a1a;letter-spacing:-0.3px;">x64j.rpf</div>
<div class="t" style="left:120.72px;top:403.18px;font-size:7px;line-height:8.40px;color:#1a1a1a;letter-spacing:-0.3px;">x64k.rpf</div>
<div class="t" style="left:120.72px;top:414.68px;font-size:7px;line-height:8.40px;color:#1a1a1a;letter-spacing:-0.3px;">x64l.rpf</div>
<div class="t" style="left:120.72px;top:426.18px;font-size:7px;line-height:8.40px;color:#1a1a1a;letter-spacing:-0.3px;">x64m.rpf</div>
<div class="t" style="left:120.72px;top:437.68px;font-size:7px;line-height:8.40px;color:#1a1a1a;letter-spacing:-0.3px;">x64n.rpf</div>
<div class="t" style="left:120.72px;top:449.18px;font-size:7px;line-height:8.40px;color:#1a1a1a;letter-spacing:-0.3px;">x64o.rpf</div>
<div class="t" style="left:120.72px;top:460.68px;font-size:7px;line-height:8.40px;color:#1a1a1a;letter-spacing:-0.3px;">x64p.rpf</div>
<div class="t" style="left:120.72px;top:472.18px;font-size:7px;line-height:8.40px;color:#1a1a1a;letter-spacing:-0.3px;">x64q.rpf</div>
<div class="t" style="left:120.72px;top:483.68px;font-size:7px;line-height:8.40px;color:#1a1a1a;letter-spacing:-0.3px;">x64r.rpf</div>
<svg width="1000" height="585" viewBox="0 0 1000 585" style="left:0;top:0"><path d="M88.60 83.20 L91.20 85.80 L93.80 83.20" stroke="#444" stroke-width="0.9" fill="none"/><g transform="translate(98.2,80.1)"><rect x="0" y="1" width="9" height="5" fill="#555"/><rect x="0" y="2" width="9" height="1.2" fill="#999"/><path d="M2.5 4 L6.5 4 L4.5 7 Z" fill="#208040"/><rect x="0.5" y="5" width="8" height="1" fill="#777"/></g><path d="M100.90 93.50 L103.50 96.10 L100.90 98.70" stroke="#999" stroke-width="0.9" fill="none"/><g transform="translate(109.32,91.6)"><path d="M0 0.5 L3 0 L3 9 L0 9 Z" fill="#e2b94c"/><path d="M2.5 0 L7.5 0.8 L7.5 9 L2.5 9 Z" fill="#f5d979"/><path d="M2.5 0 L3.6 0 L3.6 9 L2.5 9 Z" fill="#ffe9a6"/><rect x="6.3" y="7.2" width="1.2" height="1.2" fill="#5aa070"/></g><path d="M100.90 105.00 L103.50 107.60 L100.90 110.20" stroke="#999" stroke-width="0.9" fill="none"/><g transform="translate(109.32,103.1)"><path d="M0 0.5 L3 0 L3 9 L0 9 Z" fill="#e2b94c"/><path d="M2.5 0 L7.5 0.8 L7.5 9 L2.5 9 Z" fill="#f5d979"/><path d="M2.5 0 L3.6 0 L3.6 9 L2.5 9 Z" fill="#ffe9a6"/><rect x="6.3" y="7.2" width="1.2" height="1.2" fill="#5aa070"/></g><path d="M99.52 117.70 L102.12 120.30 L104.72 117.70" stroke="#444" stroke-width="0.9" fill="none"/><g transform="translate(109.32,114.6)"><rect x="0" y="0" width="7.7" height="9" fill="#8c8cf6"/><rect x="0" y="0" width="1.2" height="9" fill="#6f6fe8"/><rect x="6" y="7" width="1.5" height="1.5" fill="#5a5ad0"/></g><path d="M110.44 129.20 L113.04 131.80 L115.64 129.20" stroke="#444" stroke-width="0.9" fill="none"/><g transform="translate(120.23999999999998,126.1)"><path d="M0 0.5 L3 0 L3 9 L0 9 Z" fill="#e2b94c"/><path d="M2.5 0 L7.5 0.8 L7.5 9 L2.5 9 Z" fill="#f5d979"/><path d="M2.5 0 L3.6 0 L3.6 9 L2.5 9 Z" fill="#ffe9a6"/><rect x="6.3" y="7.2" width="1.2" height="1.2" fill="#5aa070"/></g><path d="M122.74 139.50 L125.34 142.10 L122.74 144.70" stroke="#999" stroke-width="0.9" fill="none"/><g transform="translate(131.16,137.6)"><rect x="0" y="0" width="6.8" height="8.8" fill="#4f9c86"/><rect x="1.5" y="0.5" width="1.5" height="8" fill="#9ad0b8"/><rect x="4" y="0.5" width="1.5" height="8" fill="#7fb8a8"/><rect x="0" y="0" width="6.8" height="1" fill="#6aa0c0"/></g><path d="M121.36 152.20 L123.96 154.80 L126.56 152.20" stroke="#444" stroke-width="0.9" fill="none"/><g transform="translate(131.16,149.1)"><path d="M0.5 2.5 L2.5 0.5 L8 0.5 L8 6.5 L6 8.5 L0.5 8.5 Z" fill="#bcd4f4" stroke="#8fb0e0" stroke-width="0.6"/><path d="M0.5 2.5 L6 2.5 L8 0.5 M6 2.5 L6 8.5" stroke="#8fb0e0" stroke-width="0.6" fill="none"/><rect x="1" y="3" width="4.6" height="5" fill="#d6e6fa"/></g><path d="M132.28 163.70 L134.88 166.30 L137.48 163.70" stroke="#444" stroke-width="0.9" fill="none"/><g transform="translate(142.07999999999998,160.6)"><rect x="0" y="0" width="6.8" height="8.8" fill="#4f9c86"/><rect x="1.5" y="0.5" width="1.5" height="8" fill="#9ad0b8"/><rect x="4" y="0.5" width="1.5" height="8" fill="#7fb8a8"/><rect x="0" y="0" width="6.8" height="1" fill="#6aa0c0"/></g><path d="M144.58 174.00 L147.18 176.60 L144.58 179.20" stroke="#999" stroke-width="0.9" fill="none"/><g transform="translate(153.0,172.1)"><path d="M0 0 L3.5 0 L4.5 1 L9 1 L9 8 L0 8 Z" fill="#e8c25a"/><path d="M0.5 2.5 L9.2 2.5 L9.2 8 L0.5 8 Z" fill="#f8e090"/><path d="M1 8 Q4.5 3.5 8.5 8 Z" fill="#3a9ae0"/><rect x="3.5" y="5.5" width="2" height="2.5" fill="#e8c25a"/></g><path d="M144.58 185.50 L147.18 188.10 L144.58 190.70" stroke="#999" stroke-width="0.9" fill="none"/><g transform="translate(153.0,183.6)"><path d="M0 0.5 L3 0 L3 9 L0 9 Z" fill="#e2b94c"/><path d="M2.5 0 L7.5 0.8 L7.5 9 L2.5 9 Z" fill="#f5d979"/><path d="M2.5 0 L3.6 0 L3.6 9 L2.5 9 Z" fill="#ffe9a6"/><rect x="6.3" y="7.2" width="1.2" height="1.2" fill="#5aa070"/></g><path d="M133.66 197.00 L136.26 199.60 L133.66 202.20" stroke="#999" stroke-width="0.9" fill="none"/><g transform="translate(142.07999999999998,195.1)"><path d="M0 0.5 L3 0 L3 9 L0 9 Z" fill="#e2b94c"/><path d="M2.5 0 L7.5 0.8 L7.5 9 L2.5 9 Z" fill="#f5d979"/><path d="M2.5 0 L3.6 0 L3.6 9 L2.5 9 Z" fill="#ffe9a6"/><rect x="6.3" y="7.2" width="1.2" height="1.2" fill="#5aa070"/></g><path d="M133.66 208.50 L136.26 211.10 L133.66 213.70" stroke="#999" stroke-width="0.9" fill="none"/><g transform="translate(142.07999999999998,206.6)"><rect x="0" y="0" width="6.8" height="8.8" fill="#4f9c86"/><rect x="1.5" y="0.5" width="1.5" height="8" fill="#9ad0b8"/><rect x="4" y="0.5" width="1.5" height="8" fill="#7fb8a8"/><rect x="0" y="0" width="6.8" height="1" fill="#6aa0c0"/></g><path d="M100.90 220.00 L103.50 222.60 L100.90 225.20" stroke="#999" stroke-width="0.9" fill="none"/><g transform="translate(109.32,218.1)"><path d="M0 0.5 L3 0 L3 9 L0 9 Z" fill="#e2b94c"/><path d="M2.5 0 L7.5 0.8 L7.5 9 L2.5 9 Z" fill="#f5d979"/><path d="M2.5 0 L3.6 0 L3.6 9 L2.5 9 Z" fill="#ffe9a6"/><rect x="6.3" y="7.2" width="1.2" height="1.2" fill="#5aa070"/></g><path d="M100.90 231.50 L103.50 234.10 L100.90 236.70" stroke="#999" stroke-width="0.9" fill="none"/><g transform="translate(109.32,229.6)"><path d="M0 0.5 L3 0 L3 9 L0 9 Z" fill="#e2b94c"/><path d="M2.5 0 L7.5 0.8 L7.5 9 L2.5 9 Z" fill="#f5d979"/><path d="M2.5 0 L3.6 0 L3.6 9 L2.5 9 Z" fill="#ffe9a6"/><rect x="6.3" y="7.2" width="1.2" height="1.2" fill="#5aa070"/></g><path d="M100.90 243.00 L103.50 245.60 L100.90 248.20" stroke="#999" stroke-width="0.9" fill="none"/><g transform="translate(109.32,241.1)"><path d="M0 0.5 L3 0 L3 9 L0 9 Z" fill="#e2b94c"/><path d="M2.5 0 L7.5 0.8 L7.5 9 L2.5 9 Z" fill="#f5d979"/><path d="M2.5 0 L3.6 0 L3.6 9 L2.5 9 Z" fill="#ffe9a6"/><rect x="6.3" y="7.2" width="1.2" height="1.2" fill="#5aa070"/></g><path d="M100.90 254.50 L103.50 257.10 L100.90 259.70" stroke="#999" stroke-width="0.9" fill="none"/><g transform="translate(109.32,252.60000000000002)"><path d="M0 0.5 L3 0 L3 9 L0 9 Z" fill="#e2b94c"/><path d="M2.5 0 L7.5 0.8 L7.5 9 L2.5 9 Z" fill="#f5d979"/><path d="M2.5 0 L3.6 0 L3.6 9 L2.5 9 Z" fill="#ffe9a6"/><rect x="6.3" y="7.2" width="1.2" height="1.2" fill="#5aa070"/></g><path d="M100.90 266.00 L103.50 268.60 L100.90 271.20" stroke="#999" stroke-width="0.9" fill="none"/><g transform="translate(109.32,264.1)"><rect x="0" y="0" width="6.8" height="8.8" fill="#4f9c86"/><rect x="1.5" y="0.5" width="1.5" height="8" fill="#9ad0b8"/><rect x="4" y="0.5" width="1.5" height="8" fill="#7fb8a8"/><rect x="0" y="0" width="6.8" height="1" fill="#6aa0c0"/></g><g transform="translate(109.32,275.6)"><path d="M0.5 2.5 L2.5 0.5 L8 0.5 L8 6.5 L6 8.5 L0.5 8.5 Z" fill="#bcd4f4" stroke="#8fb0e0" stroke-width="0.6"/><path d="M0.5 2.5 L6 2.5 L8 0.5 M6 2.5 L6 8.5" stroke="#8fb0e0" stroke-width="0.6" fill="none"/><rect x="1" y="3" width="4.6" height="5" fill="#d6e6fa"/></g><g transform="translate(109.32,287.1)"><path d="M0.5 2.5 L2.5 0.5 L8 0.5 L8 6.5 L6 8.5 L0.5 8.5 Z" fill="#bcd4f4" stroke="#8fb0e0" stroke-width="0.6"/><path d="M0.5 2.5 L6 2.5 L8 0.5 M6 2.5 L6 8.5" stroke="#8fb0e0" stroke-width="0.6" fill="none"/><rect x="1" y="3" width="4.6" height="5" fill="#d6e6fa"/></g><g transform="translate(109.32,298.6)"><path d="M0.5 2.5 L2.5 0.5 L8 0.5 L8 6.5 L6 8.5 L0.5 8.5 Z" fill="#bcd4f4" stroke="#8fb0e0" stroke-width="0.6"/><path d="M0.5 2.5 L6 2.5 L8 0.5 M6 2.5 L6 8.5" stroke="#8fb0e0" stroke-width="0.6" fill="none"/><rect x="1" y="3" width="4.6" height="5" fill="#d6e6fa"/></g><g transform="translate(109.32,310.1)"><path d="M0.5 2.5 L2.5 0.5 L8 0.5 L8 6.5 L6 8.5 L0.5 8.5 Z" fill="#bcd4f4" stroke="#8fb0e0" stroke-width="0.6"/><path d="M0.5 2.5 L6 2.5 L8 0.5 M6 2.5 L6 8.5" stroke="#8fb0e0" stroke-width="0.6" fill="none"/><rect x="1" y="3" width="4.6" height="5" fill="#d6e6fa"/></g><g transform="translate(109.32,321.6)"><path d="M0.5 2.5 L2.5 0.5 L8 0.5 L8 6.5 L6 8.5 L0.5 8.5 Z" fill="#bcd4f4" stroke="#8fb0e0" stroke-width="0.6"/><path d="M0.5 2.5 L6 2.5 L8 0.5 M6 2.5 L6 8.5" stroke="#8fb0e0" stroke-width="0.6" fill="none"/><rect x="1" y="3" width="4.6" height="5" fill="#d6e6fa"/></g><g transform="translate(109.32,333.1)"><path d="M0.5 2.5 L2.5 0.5 L8 0.5 L8 6.5 L6 8.5 L0.5 8.5 Z" fill="#bcd4f4" stroke="#8fb0e0" stroke-width="0.6"/><path d="M0.5 2.5 L6 2.5 L8 0.5 M6 2.5 L6 8.5" stroke="#8fb0e0" stroke-width="0.6" fill="none"/><rect x="1" y="3" width="4.6" height="5" fill="#d6e6fa"/></g><g transform="translate(109.32,344.6)"><path d="M0.5 2.5 L2.5 0.5 L8 0.5 L8 6.5 L6 8.5 L0.5 8.5 Z" fill="#bcd4f4" stroke="#8fb0e0" stroke-width="0.6"/><path d="M0.5 2.5 L6 2.5 L8 0.5 M6 2.5 L6 8.5" stroke="#8fb0e0" stroke-width="0.6" fill="none"/><rect x="1" y="3" width="4.6" height="5" fill="#d6e6fa"/></g><g transform="translate(109.32,356.1)"><path d="M0.5 2.5 L2.5 0.5 L8 0.5 L8 6.5 L6 8.5 L0.5 8.5 Z" fill="#bcd4f4" stroke="#8fb0e0" stroke-width="0.6"/><path d="M0.5 2.5 L6 2.5 L8 0.5 M6 2.5 L6 8.5" stroke="#8fb0e0" stroke-width="0.6" fill="none"/><rect x="1" y="3" width="4.6" height="5" fill="#d6e6fa"/></g><g transform="translate(109.32,367.6)"><path d="M0.5 2.5 L2.5 0.5 L8 0.5 L8 6.5 L6 8.5 L0.5 8.5 Z" fill="#bcd4f4" stroke="#8fb0e0" stroke-width="0.6"/><path d="M0.5 2.5 L6 2.5 L8 0.5 M6 2.5 L6 8.5" stroke="#8fb0e0" stroke-width="0.6" fill="none"/><rect x="1" y="3" width="4.6" height="5" fill="#d6e6fa"/></g><g transform="translate(109.32,379.1)"><path d="M0.5 2.5 L2.5 0.5 L8 0.5 L8 6.5 L6 8.5 L0.5 8.5 Z" fill="#bcd4f4" stroke="#8fb0e0" stroke-width="0.6"/><path d="M0.5 2.5 L6 2.5 L8 0.5 M6 2.5 L6 8.5" stroke="#8fb0e0" stroke-width="0.6" fill="none"/><rect x="1" y="3" width="4.6" height="5" fill="#d6e6fa"/></g><g transform="translate(109.32,390.6)"><path d="M0.5 2.5 L2.5 0.5 L8 0.5 L8 6.5 L6 8.5 L0.5 8.5 Z" fill="#bcd4f4" stroke="#8fb0e0" stroke-width="0.6"/><path d="M0.5 2.5 L6 2.5 L8 0.5 M6 2.5 L6 8.5" stroke="#8fb0e0" stroke-width="0.6" fill="none"/><rect x="1" y="3" width="4.6" height="5" fill="#d6e6fa"/></g><g transform="translate(109.32,402.1)"><path d="M0.5 2.5 L2.5 0.5 L8 0.5 L8 6.5 L6 8.5 L0.5 8.5 Z" fill="#bcd4f4" stroke="#8fb0e0" stroke-width="0.6"/><path d="M0.5 2.5 L6 2.5 L8 0.5 M6 2.5 L6 8.5" stroke="#8fb0e0" stroke-width="0.6" fill="none"/><rect x="1" y="3" width="4.6" height="5" fill="#d6e6fa"/></g><g transform="translate(109.32,413.6)"><path d="M0.5 2.5 L2.5 0.5 L8 0.5 L8 6.5 L6 8.5 L0.5 8.5 Z" fill="#bcd4f4" stroke="#8fb0e0" stroke-width="0.6"/><path d="M0.5 2.5 L6 2.5 L8 0.5 M6 2.5 L6 8.5" stroke="#8fb0e0" stroke-width="0.6" fill="none"/><rect x="1" y="3" width="4.6" height="5" fill="#d6e6fa"/></g><g transform="translate(109.32,425.1)"><path d="M0.5 2.5 L2.5 0.5 L8 0.5 L8 6.5 L6 8.5 L0.5 8.5 Z" fill="#bcd4f4" stroke="#8fb0e0" stroke-width="0.6"/><path d="M0.5 2.5 L6 2.5 L8 0.5 M6 2.5 L6 8.5" stroke="#8fb0e0" stroke-width="0.6" fill="none"/><rect x="1" y="3" width="4.6" height="5" fill="#d6e6fa"/></g><g transform="translate(109.32,436.6)"><path d="M0.5 2.5 L2.5 0.5 L8 0.5 L8 6.5 L6 8.5 L0.5 8.5 Z" fill="#bcd4f4" stroke="#8fb0e0" stroke-width="0.6"/><path d="M0.5 2.5 L6 2.5 L8 0.5 M6 2.5 L6 8.5" stroke="#8fb0e0" stroke-width="0.6" fill="none"/><rect x="1" y="3" width="4.6" height="5" fill="#d6e6fa"/></g><g transform="translate(109.32,448.1)"><path d="M0.5 2.5 L2.5 0.5 L8 0.5 L8 6.5 L6 8.5 L0.5 8.5 Z" fill="#bcd4f4" stroke="#8fb0e0" stroke-width="0.6"/><path d="M0.5 2.5 L6 2.5 L8 0.5 M6 2.5 L6 8.5" stroke="#8fb0e0" stroke-width="0.6" fill="none"/><rect x="1" y="3" width="4.6" height="5" fill="#d6e6fa"/></g><g transform="translate(109.32,459.6)"><path d="M0.5 2.5 L2.5 0.5 L8 0.5 L8 6.5 L6 8.5 L0.5 8.5 Z" fill="#bcd4f4" stroke="#8fb0e0" stroke-width="0.6"/><path d="M0.5 2.5 L6 2.5 L8 0.5 M6 2.5 L6 8.5" stroke="#8fb0e0" stroke-width="0.6" fill="none"/><rect x="1" y="3" width="4.6" height="5" fill="#d6e6fa"/></g><g transform="translate(109.32,471.1)"><path d="M0.5 2.5 L2.5 0.5 L8 0.5 L8 6.5 L6 8.5 L0.5 8.5 Z" fill="#bcd4f4" stroke="#8fb0e0" stroke-width="0.6"/><path d="M0.5 2.5 L6 2.5 L8 0.5 M6 2.5 L6 8.5" stroke="#8fb0e0" stroke-width="0.6" fill="none"/><rect x="1" y="3" width="4.6" height="5" fill="#d6e6fa"/></g><g transform="translate(109.32,482.6)"><path d="M0.5 2.5 L2.5 0.5 L8 0.5 L8 6.5 L6 8.5 L0.5 8.5 Z" fill="#bcd4f4" stroke="#8fb0e0" stroke-width="0.6"/><path d="M0.5 2.5 L6 2.5 L8 0.5 M6 2.5 L6 8.5" stroke="#8fb0e0" stroke-width="0.6" fill="none"/><rect x="1" y="3" width="4.6" height="5" fill="#d6e6fa"/></g></svg>
<div style="position:absolute;left:300.00px;top:77.00px;width:9.00px;height:417.00px;background:#f0f0f0;"></div>
<div style="position:absolute;left:300.00px;top:89.00px;width:9.00px;height:331.00px;background:#cdcdcd;"></div>
<svg width="1000" height="585" viewBox="0 0 1000 585" style="left:0;top:0"><path d="M302.3 85 L304.5 82.6 L306.7 85" stroke="#555" stroke-width="1" fill="none"/><path d="M302.3 487.6 L304.5 490 L306.7 487.6" stroke="#555" stroke-width="1" fill="none"/></svg>
<div style="position:absolute;left:310.00px;top:77.00px;width:1.00px;height:417.00px;background:#d6dde6;"></div>
<div style="position:absolute;left:0;top:90.5px;width:1000px;height:403.5px;overflow:hidden">
<svg width="1000" height="410" viewBox="0 0 1000 410" style="left:0;top:0"><g transform="translate(314,-2.20)"><path d="M0 0.5 L3 0 L3 9 L0 9 Z" fill="#e2b94c"/><path d="M2.5 0 L7.8 0.8 L7.8 9 L2.5 9 Z" fill="#f5d979"/><rect x="6.5" y="7.2" width="1.2" height="1.2" fill="#5aa070"/></g><g transform="translate(314,8.15)"><path d="M0 0.5 L3 0 L3 9 L0 9 Z" fill="#e2b94c"/><path d="M2.5 0 L7.8 0.8 L7.8 9 L2.5 9 Z" fill="#f5d979"/><rect x="6.5" y="7.2" width="1.2" height="1.2" fill="#5aa070"/></g><rect x="344.5" y="24.77" width="380.5" height="0.9" fill="#c2d0e8"/><path d="M730.3 26.17 L732.5 23.97 L734.7 26.17" stroke="#2244a8" stroke-width="1.1" fill="none"/><g transform="translate(314.5,32.40)"><path d="M0.5 0.5 L5.5 0.5 L7.5 2.5 L7.5 8.8 L0.5 8.8 Z" fill="#fff" stroke="#a8a8a8" stroke-width="0.8"/></g><g transform="translate(314.5,42.75)"><path d="M0.5 0.5 L5.5 0.5 L7.5 2.5 L7.5 8.8 L0.5 8.8 Z" fill="#fff" stroke="#a8a8a8" stroke-width="0.8"/></g><rect x="369.0" y="59.37" width="356.0" height="0.9" fill="#c2d0e8"/><path d="M730.3 60.77 L732.5 58.57 L734.7 60.77" stroke="#2244a8" stroke-width="1.1" fill="none"/><g transform="translate(314.3,67.00)"><path d="M0.5 0.5 L5.5 0.5 L7.5 2.5 L7.5 8.5 L0.5 8.5 Z" fill="#fbfbfb" stroke="#9a9a9a" stroke-width="0.8"/><rect x="2" y="3" width="4" height="0.9" fill="#50b0a0"/><circle cx="4" cy="2.8" r="0.9" fill="#2aa080"/><rect x="2" y="5.5" width="4" height="0.8" fill="#b0a0c8"/><rect x="2" y="7" width="4" height="0.6" fill="#c8c8d8"/></g><g transform="translate(314.3,77.35)"><path d="M0.5 0.5 L5.5 0.5 L7.5 2.5 L7.5 8.5 L0.5 8.5 Z" fill="#fbfbfb" stroke="#9a9a9a" stroke-width="0.8"/><rect x="2" y="3" width="4" height="0.9" fill="#50b0a0"/><circle cx="4" cy="2.8" r="0.9" fill="#2aa080"/><rect x="2" y="5.5" width="4" height="0.8" fill="#b0a0c8"/><rect x="2" y="7" width="4" height="0.6" fill="#c8c8d8"/></g><g transform="translate(314.3,87.70)"><path d="M0.5 0.5 L5.5 0.5 L7.5 2.5 L7.5 8.5 L0.5 8.5 Z" fill="#fbfbfb" stroke="#9a9a9a" stroke-width="0.8"/><rect x="2" y="3" width="4" height="0.9" fill="#50b0a0"/><circle cx="4" cy="2.8" r="0.9" fill="#2aa080"/><rect x="2" y="5.5" width="4" height="0.8" fill="#b0a0c8"/><rect x="2" y="7" width="4" height="0.6" fill="#c8c8d8"/></g><g transform="translate(314.3,98.05)"><path d="M0.5 0.5 L5.5 0.5 L7.5 2.5 L7.5 8.5 L0.5 8.5 Z" fill="#fbfbfb" stroke="#9a9a9a" stroke-width="0.8"/><rect x="2" y="3" width="4" height="0.9" fill="#50b0a0"/><circle cx="4" cy="2.8" r="0.9" fill="#2aa080"/><rect x="2" y="5.5" width="4" height="0.8" fill="#b0a0c8"/><rect x="2" y="7" width="4" height="0.6" fill="#c8c8d8"/></g><g transform="translate(314.3,108.40)"><path d="M0.5 0.5 L5.5 0.5 L7.5 2.5 L7.5 8.5 L0.5 8.5 Z" fill="#fbfbfb" stroke="#9a9a9a" stroke-width="0.8"/><rect x="2" y="3" width="4" height="0.9" fill="#50b0a0"/><circle cx="4" cy="2.8" r="0.9" fill="#2aa080"/><rect x="2" y="5.5" width="4" height="0.8" fill="#b0a0c8"/><rect x="2" y="7" width="4" height="0.6" fill="#c8c8d8"/></g><g transform="translate(314.3,118.75)"><path d="M0.5 0.5 L5.5 0.5 L7.5 2.5 L7.5 8.5 L0.5 8.5 Z" fill="#fbfbfb" stroke="#9a9a9a" stroke-width="0.8"/><rect x="2" y="3" width="4" height="0.9" fill="#50b0a0"/><circle cx="4" cy="2.8" r="0.9" fill="#2aa080"/><rect x="2" y="5.5" width="4" height="0.8" fill="#b0a0c8"/><rect x="2" y="7" width="4" height="0.6" fill="#c8c8d8"/></g><g transform="translate(314.3,129.10)"><path d="M0.5 0.5 L5.5 0.5 L7.5 2.5 L7.5 8.5 L0.5 8.5 Z" fill="#fbfbfb" stroke="#9a9a9a" stroke-width="0.8"/><rect x="2" y="3" width="4" height="0.9" fill="#50b0a0"/><circle cx="4" cy="2.8" r="0.9" fill="#2aa080"/><rect x="2" y="5.5" width="4" height="0.8" fill="#b0a0c8"/><rect x="2" y="7" width="4" height="0.6" fill="#c8c8d8"/></g><g transform="translate(314.3,139.45)"><path d="M0.5 0.5 L5.5 0.5 L7.5 2.5 L7.5 8.5 L0.5 8.5 Z" fill="#fbfbfb" stroke="#9a9a9a" stroke-width="0.8"/><rect x="2" y="3" width="4" height="0.9" fill="#50b0a0"/><circle cx="4" cy="2.8" r="0.9" fill="#2aa080"/><rect x="2" y="5.5" width="4" height="0.8" fill="#b0a0c8"/><rect x="2" y="7" width="4" height="0.6" fill="#c8c8d8"/></g><g transform="translate(314.3,149.80)"><path d="M0.5 0.5 L5.5 0.5 L7.5 2.5 L7.5 8.5 L0.5 8.5 Z" fill="#fbfbfb" stroke="#9a9a9a" stroke-width="0.8"/><rect x="2" y="3" width="4" height="0.9" fill="#50b0a0"/><circle cx="4" cy="2.8" r="0.9" fill="#2aa080"/><rect x="2" y="5.5" width="4" height="0.8" fill="#b0a0c8"/><rect x="2" y="7" width="4" height="0.6" fill="#c8c8d8"/></g><g transform="translate(314.3,160.15)"><path d="M0.5 0.5 L5.5 0.5 L7.5 2.5 L7.5 8.5 L0.5 8.5 Z" fill="#fbfbfb" stroke="#9a9a9a" stroke-width="0.8"/><rect x="2" y="3" width="4" height="0.9" fill="#50b0a0"/><circle cx="4" cy="2.8" r="0.9" fill="#2aa080"/><rect x="2" y="5.5" width="4" height="0.8" fill="#b0a0c8"/><rect x="2" y="7" width="4" height="0.6" fill="#c8c8d8"/></g><g transform="translate(314.3,170.50)"><path d="M0.5 0.5 L5.5 0.5 L7.5 2.5 L7.5 8.5 L0.5 8.5 Z" fill="#fbfbfb" stroke="#9a9a9a" stroke-width="0.8"/><rect x="2" y="3" width="4" height="0.9" fill="#50b0a0"/><circle cx="4" cy="2.8" r="0.9" fill="#2aa080"/><rect x="2" y="5.5" width="4" height="0.8" fill="#b0a0c8"/><rect x="2" y="7" width="4" height="0.6" fill="#c8c8d8"/></g><g transform="translate(314.3,180.85)"><path d="M0.5 0.5 L5.5 0.5 L7.5 2.5 L7.5 8.5 L0.5 8.5 Z" fill="#fbfbfb" stroke="#9a9a9a" stroke-width="0.8"/><rect x="2" y="3" width="4" height="0.9" fill="#50b0a0"/><circle cx="4" cy="2.8" r="0.9" fill="#2aa080"/><rect x="2" y="5.5" width="4" height="0.8" fill="#b0a0c8"/><rect x="2" y="7" width="4" height="0.6" fill="#c8c8d8"/></g><g transform="translate(314.3,191.20)"><path d="M0.5 0.5 L5.5 0.5 L7.5 2.5 L7.5 8.5 L0.5 8.5 Z" fill="#fbfbfb" stroke="#9a9a9a" stroke-width="0.8"/><rect x="2" y="3" width="4" height="0.9" fill="#50b0a0"/><circle cx="4" cy="2.8" r="0.9" fill="#2aa080"/><rect x="2" y="5.5" width="4" height="0.8" fill="#b0a0c8"/><rect x="2" y="7" width="4" height="0.6" fill="#c8c8d8"/></g><g transform="translate(314.3,201.55)"><path d="M0.5 0.5 L5.5 0.5 L7.5 2.5 L7.5 8.5 L0.5 8.5 Z" fill="#fbfbfb" stroke="#9a9a9a" stroke-width="0.8"/><rect x="2" y="3" width="4" height="0.9" fill="#50b0a0"/><circle cx="4" cy="2.8" r="0.9" fill="#2aa080"/><rect x="2" y="5.5" width="4" height="0.8" fill="#b0a0c8"/><rect x="2" y="7" width="4" height="0.6" fill="#c8c8d8"/></g><g transform="translate(314.3,211.90)"><path d="M0.5 0.5 L5.5 0.5 L7.5 2.5 L7.5 8.5 L0.5 8.5 Z" fill="#fbfbfb" stroke="#9a9a9a" stroke-width="0.8"/><rect x="2" y="3" width="4" height="0.9" fill="#50b0a0"/><circle cx="4" cy="2.8" r="0.9" fill="#2aa080"/><rect x="2" y="5.5" width="4" height="0.8" fill="#b0a0c8"/><rect x="2" y="7" width="4" height="0.6" fill="#c8c8d8"/></g><g transform="translate(314.3,222.25)"><path d="M0.5 0.5 L5.5 0.5 L7.5 2.5 L7.5 8.5 L0.5 8.5 Z" fill="#fbfbfb" stroke="#9a9a9a" stroke-width="0.8"/><rect x="2" y="3" width="4" height="0.9" fill="#50b0a0"/><circle cx="4" cy="2.8" r="0.9" fill="#2aa080"/><rect x="2" y="5.5" width="4" height="0.8" fill="#b0a0c8"/><rect x="2" y="7" width="4" height="0.6" fill="#c8c8d8"/></g><g transform="translate(314.3,232.60)"><path d="M0.5 0.5 L5.5 0.5 L7.5 2.5 L7.5 8.5 L0.5 8.5 Z" fill="#fbfbfb" stroke="#9a9a9a" stroke-width="0.8"/><rect x="2" y="3" width="4" height="0.9" fill="#50b0a0"/><circle cx="4" cy="2.8" r="0.9" fill="#2aa080"/><rect x="2" y="5.5" width="4" height="0.8" fill="#b0a0c8"/><rect x="2" y="7" width="4" height="0.6" fill="#c8c8d8"/></g><rect x="358.0" y="249.23" width="367.0" height="0.9" fill="#c2d0e8"/><path d="M730.3 250.63 L732.5 248.43 L734.7 250.63" stroke="#2244a8" stroke-width="1.1" fill="none"/><g transform="translate(314.5,256.85)"><path d="M0.5 0.5 L5.5 0.5 L7.5 2.5 L7.5 8.8 L0.5 8.8 Z" fill="#fff" stroke="#a8a8a8" stroke-width="0.8"/></g><rect x="360.0" y="273.48" width="365.0" height="0.9" fill="#c2d0e8"/><path d="M730.3 274.88 L732.5 272.68 L734.7 274.88" stroke="#2244a8" stroke-width="1.1" fill="none"/><g transform="translate(314.3,281.10)"><path d="M0.5 0.5 L5.5 0.5 L7.5 2.5 L7.5 8.5 L0.5 8.5 Z" fill="#fbfbfb" stroke="#9a9a9a" stroke-width="0.8"/><rect x="2" y="3" width="4" height="0.9" fill="#50b0a0"/><circle cx="4" cy="2.8" r="0.9" fill="#2aa080"/><rect x="2" y="5.5" width="4" height="0.8" fill="#b0a0c8"/><rect x="2" y="7" width="4" height="0.6" fill="#c8c8d8"/></g><rect x="312.5" y="291.58" width="294" height="9.5" fill="#cce8ff" stroke="#8aa8c8" stroke-width="0.8" stroke-dasharray="1.5 1"/><g transform="translate(314.3,291.45)"><path d="M0.5 0.5 L5.5 0.5 L7.5 2.5 L7.5 8.5 L0.5 8.5 Z" fill="#fbfbfb" stroke="#9a9a9a" stroke-width="0.8"/><rect x="2" y="3" width="4" height="0.9" fill="#50b0a0"/><circle cx="4" cy="2.8" r="0.9" fill="#2aa080"/><rect x="2" y="5.5" width="4" height="0.8" fill="#b0a0c8"/><rect x="2" y="7" width="4" height="0.6" fill="#c8c8d8"/></g><g transform="translate(314.3,301.80)"><path d="M0.5 0.5 L5.5 0.5 L7.5 2.5 L7.5 8.5 L0.5 8.5 Z" fill="#fbfbfb" stroke="#9a9a9a" stroke-width="0.8"/><rect x="2" y="3" width="4" height="0.9" fill="#50b0a0"/><circle cx="4" cy="2.8" r="0.9" fill="#2aa080"/><rect x="2" y="5.5" width="4" height="0.8" fill="#b0a0c8"/><rect x="2" y="7" width="4" height="0.6" fill="#c8c8d8"/></g><g transform="translate(314.3,312.15)"><path d="M0.5 0.5 L5.5 0.5 L7.5 2.5 L7.5 8.5 L0.5 8.5 Z" fill="#fbfbfb" stroke="#9a9a9a" stroke-width="0.8"/><rect x="2" y="3" width="4" height="0.9" fill="#50b0a0"/><circle cx="4" cy="2.8" r="0.9" fill="#2aa080"/><rect x="2" y="5.5" width="4" height="0.8" fill="#b0a0c8"/><rect x="2" y="7" width="4" height="0.6" fill="#c8c8d8"/></g><g transform="translate(314.3,322.50)"><path d="M0.5 0.5 L5.5 0.5 L7.5 2.5 L7.5 8.5 L0.5 8.5 Z" fill="#fbfbfb" stroke="#9a9a9a" stroke-width="0.8"/><rect x="2" y="3" width="4" height="0.9" fill="#50b0a0"/><circle cx="4" cy="2.8" r="0.9" fill="#2aa080"/><rect x="2" y="5.5" width="4" height="0.8" fill="#b0a0c8"/><rect x="2" y="7" width="4" height="0.6" fill="#c8c8d8"/></g><g transform="translate(314.3,332.85)"><path d="M0.5 0.5 L5.5 0.5 L7.5 2.5 L7.5 8.5 L0.5 8.5 Z" fill="#fbfbfb" stroke="#9a9a9a" stroke-width="0.8"/><rect x="2" y="3" width="4" height="0.9" fill="#50b0a0"/><circle cx="4" cy="2.8" r="0.9" fill="#2aa080"/><rect x="2" y="5.5" width="4" height="0.8" fill="#b0a0c8"/><rect x="2" y="7" width="4" height="0.6" fill="#c8c8d8"/></g><g transform="translate(314.3,343.20)"><path d="M0.5 0.5 L5.5 0.5 L7.5 2.5 L7.5 8.5 L0.5 8.5 Z" fill="#fbfbfb" stroke="#9a9a9a" stroke-width="0.8"/><rect x="2" y="3" width="4" height="0.9" fill="#50b0a0"/><circle cx="4" cy="2.8" r="0.9" fill="#2aa080"/><rect x="2" y="5.5" width="4" height="0.8" fill="#b0a0c8"/><rect x="2" y="7" width="4" height="0.6" fill="#c8c8d8"/></g><g transform="translate(314.3,353.55)"><path d="M0.5 0.5 L5.5 0.5 L7.5 2.5 L7.5 8.5 L0.5 8.5 Z" fill="#fbfbfb" stroke="#9a9a9a" stroke-width="0.8"/><rect x="2" y="3" width="4" height="0.9" fill="#50b0a0"/><circle cx="4" cy="2.8" r="0.9" fill="#2aa080"/><rect x="2" y="5.5" width="4" height="0.8" fill="#b0a0c8"/><rect x="2" y="7" width="4" height="0.6" fill="#c8c8d8"/></g><g transform="translate(314.3,363.90)"><path d="M0.5 0.5 L5.5 0.5 L7.5 2.5 L7.5 8.5 L0.5 8.5 Z" fill="#fbfbfb" stroke="#9a9a9a" stroke-width="0.8"/><rect x="2" y="3" width="4" height="0.9" fill="#50b0a0"/><circle cx="4" cy="2.8" r="0.9" fill="#2aa080"/><rect x="2" y="5.5" width="4" height="0.8" fill="#b0a0c8"/><rect x="2" y="7" width="4" height="0.6" fill="#c8c8d8"/></g><g transform="translate(314.3,374.25)"><path d="M0.5 0.5 L5.5 0.5 L7.5 2.5 L7.5 8.5 L0.5 8.5 Z" fill="#fbfbfb" stroke="#9a9a9a" stroke-width="0.8"/><rect x="2" y="3" width="4" height="0.9" fill="#50b0a0"/><circle cx="4" cy="2.8" r="0.9" fill="#2aa080"/><rect x="2" y="5.5" width="4" height="0.8" fill="#b0a0c8"/><rect x="2" y="7" width="4" height="0.6" fill="#c8c8d8"/></g><g transform="translate(314.3,384.60)"><path d="M0.5 0.5 L5.5 0.5 L7.5 2.5 L7.5 8.5 L0.5 8.5 Z" fill="#fbfbfb" stroke="#9a9a9a" stroke-width="0.8"/><rect x="2" y="3" width="4" height="0.9" fill="#50b0a0"/><circle cx="4" cy="2.8" r="0.9" fill="#2aa080"/><rect x="2" y="5.5" width="4" height="0.8" fill="#b0a0c8"/><rect x="2" y="7" width="4" height="0.6" fill="#c8c8d8"/></g><g transform="translate(314.3,394.95)"><path d="M0.5 0.5 L5.5 0.5 L7.5 2.5 L7.5 8.5 L0.5 8.5 Z" fill="#fbfbfb" stroke="#9a9a9a" stroke-width="0.8"/><rect x="2" y="3" width="4" height="0.9" fill="#50b0a0"/><circle cx="4" cy="2.8" r="0.9" fill="#2aa080"/><rect x="2" y="5.5" width="4" height="0.8" fill="#b0a0c8"/><rect x="2" y="7" width="4" height="0.6" fill="#c8c8d8"/></g></svg>
<div class="t" style="left:324.00px;top:-1.62px;font-size:7px;line-height:8.40px;color:#1a1a1a;letter-spacing:-0.3px;">timecycle</div>
<div class="t" style="left:403.30px;top:-1.62px;font-size:7px;line-height:8.40px;color:#1a1a1a;letter-spacing:-0.45px;">Folder</div>
<div class="t" style="right:529.50px;top:-1.62px;font-size:7px;line-height:8.40px;color:#1a1a1a;letter-spacing:-0.32px;text-align:right;">15 items</div>
<div class="t" style="left:478.20px;top:-1.62px;font-size:7px;line-height:8.40px;color:#1a1a1a;letter-spacing:-0.42px;">Folder</div>
<div class="t" style="left:553.10px;top:-1.62px;font-size:7px;line-height:8.40px;color:#1a1a1a;letter-spacing:-0.32px;">No</div>
<div class="t" style="left:324.00px;top:8.73px;font-size:7px;line-height:8.40px;color:#1a1a1a;letter-spacing:-0.3px;">ui</div>
<div class="t" style="left:403.30px;top:8.73px;font-size:7px;line-height:8.40px;color:#1a1a1a;letter-spacing:-0.45px;">Folder</div>
<div class="t" style="right:529.50px;top:8.73px;font-size:7px;line-height:8.40px;color:#1a1a1a;letter-spacing:-0.32px;text-align:right;">14 items</div>
<div class="t" style="left:478.20px;top:8.73px;font-size:7px;line-height:8.40px;color:#1a1a1a;letter-spacing:-0.42px;">Folder</div>
<div class="t" style="left:553.10px;top:8.73px;font-size:7px;line-height:8.40px;color:#1a1a1a;letter-spacing:-0.32px;">No</div>
<div class="t" style="left:319.00px;top:21.05px;font-size:7px;line-height:8.40px;color:#2244a8;letter-spacing:-0.3px;">Data (2)</div>
<div class="t" style="left:324.00px;top:32.98px;font-size:7px;line-height:8.40px;color:#1a1a1a;letter-spacing:-0.3px;">gta5_cache_y.dat</div>
<div class="t" style="left:403.30px;top:32.98px;font-size:7px;line-height:8.40px;color:#1a1a1a;letter-spacing:-0.45px;">Data</div>
<div class="t" style="right:529.50px;top:32.98px;font-size:7px;line-height:8.40px;color:#1a1a1a;letter-spacing:-0.32px;text-align:right;">646 KB</div>
<div class="t" style="left:478.20px;top:32.98px;font-size:7px;line-height:8.40px;color:#1a1a1a;letter-spacing:-0.42px;">Compressed;Encrypted;</div>
<div class="t" style="left:553.10px;top:32.98px;font-size:7px;line-height:8.40px;color:#1a1a1a;letter-spacing:-0.32px;">No</div>
<div class="t" style="left:324.00px;top:43.33px;font-size:7px;line-height:8.40px;color:#1a1a1a;letter-spacing:-0.3px;">visualsettings.dat</div>
<div class="t" style="left:403.30px;top:43.33px;font-size:7px;line-height:8.40px;color:#1a1a1a;letter-spacing:-0.45px;">Data</div>
<div class="t" style="right:529.50px;top:43.33px;font-size:7px;line-height:8.40px;color:#1a1a1a;letter-spacing:-0.32px;text-align:right;">42.94 KB</div>
<div class="t" style="left:478.20px;top:43.33px;font-size:7px;line-height:8.40px;color:#1a1a1a;letter-spacing:-0.42px;">Compressed;Encrypted;</div>
<div class="t" style="left:553.10px;top:43.33px;font-size:7px;line-height:8.40px;color:#1a1a1a;letter-spacing:-0.32px;">No</div>
<div class="t" style="left:319.00px;top:55.65px;font-size:7px;line-height:8.40px;color:#2244a8;letter-spacing:-0.3px;">Meta (XML) (17)</div>
<div class="t" style="left:324.00px;top:67.58px;font-size:7px;line-height:8.40px;color:#1a1a1a;letter-spacing:-0.3px;">dispatch.meta</div>
<div class="t" style="left:403.30px;top:67.58px;font-size:7px;line-height:8.40px;color:#1a1a1a;letter-spacing:-0.45px;">Meta (XML)</div>
<div class="t" style="right:529.50px;top:67.58px;font-size:7px;line-height:8.40px;color:#1a1a1a;letter-spacing:-0.32px;text-align:right;">35.03 KB</div>
<div class="t" style="left:478.20px;top:67.58px;font-size:7px;line-height:8.40px;color:#1a1a1a;letter-spacing:-0.42px;">Compressed;</div>
<div class="t" style="left:553.10px;top:67.58px;font-size:7px;line-height:8.40px;color:#1a1a1a;letter-spacing:-0.32px;">No</div>
<div class="t" style="left:324.00px;top:77.93px;font-size:7px;line-height:8.40px;color:#1a1a1a;letter-spacing:-0.3px;">events.meta</div>
<div class="t" style="left:403.30px;top:77.93px;font-size:7px;line-height:8.40px;color:#1a1a1a;letter-spacing:-0.45px;">Meta (XML)</div>
<div class="t" style="right:529.50px;top:77.93px;font-size:7px;line-height:8.40px;color:#1a1a1a;letter-spacing:-0.32px;text-align:right;">263.5 KB</div>
<div class="t" style="left:478.20px;top:77.93px;font-size:7px;line-height:8.40px;color:#1a1a1a;letter-spacing:-0.42px;">Compressed;Encrypted;</div>
<div class="t" style="left:553.10px;top:77.93px;font-size:7px;line-height:8.40px;color:#1a1a1a;letter-spacing:-0.32px;">No</div>
<div class="t" style="left:324.00px;top:88.28px;font-size:7px;line-height:8.40px;color:#1a1a1a;letter-spacing:-0.3px;">extratitleupdatedata.meta</div>
<div class="t" style="left:403.30px;top:88.28px;font-size:7px;line-height:8.40px;color:#1a1a1a;letter-spacing:-0.45px;">Meta (XML)</div>
<div class="t" style="right:529.50px;top:88.28px;font-size:7px;line-height:8.40px;color:#1a1a1a;letter-spacing:-0.32px;text-align:right;">4.069 KB</div>
<div class="t" style="left:478.20px;top:88.28px;font-size:7px;line-height:8.40px;color:#1a1a1a;letter-spacing:-0.42px;">Compressed;</div>
<div class="t" style="left:553.10px;top:88.28px;font-size:7px;line-height:8.40px;color:#1a1a1a;letter-spacing:-0.32px;">No</div>
<div class="t" style="left:324.00px;top:98.63px;font-size:7px;line-height:8.40px;color:#1a1a1a;letter-spacing:-0.3px;">garages.meta</div>
<div class="t" style="left:403.30px;top:98.63px;font-size:7px;line-height:8.40px;color:#1a1a1a;letter-spacing:-0.45px;">Meta (XML)</div>
<div class="t" style="right:529.50px;top:98.63px;font-size:7px;line-height:8.40px;color:#1a1a1a;letter-spacing:-0.32px;text-align:right;">13.77 KB</div>
<div class="t" style="left:478.20px;top:98.63px;font-size:7px;line-height:8.40px;color:#1a1a1a;letter-spacing:-0.42px;">Compressed;Encrypted;</div>
<div class="t" style="left:553.10px;top:98.63px;font-size:7px;line-height:8.40px;color:#1a1a1a;letter-spacing:-0.32px;">No</div>
<div class="t" style="left:324.00px;top:108.98px;font-size:7px;line-height:8.40px;color:#1a1a1a;letter-spacing:-0.3px;">handling.meta</div>
<div class="t" style="left:403.30px;top:108.98px;font-size:7px;line-height:8.40px;color:#1a1a1a;letter-spacing:-0.45px;">Meta (XML)</div>
<div class="t" style="right:529.50px;top:108.98px;font-size:7px;line-height:8.40px;color:#1a1a1a;letter-spacing:-0.32px;text-align:right;">759.4 KB</div>
<div class="t" style="left:478.20px;top:108.98px;font-size:7px;line-height:8.40px;color:#1a1a1a;letter-spacing:-0.42px;">Compressed;</div>
<div class="t" style="left:553.10px;top:108.98px;font-size:7px;line-height:8.40px;color:#1a1a1a;letter-spacing:-0.32px;">No</div>
<div class="t" style="left:324.00px;top:119.33px;font-size:7px;line-height:8.40px;color:#1a1a1a;letter-spacing:-0.3px;">navcapabilities.meta</div>
<div class="t" style="left:403.30px;top:119.33px;font-size:7px;line-height:8.40px;color:#1a1a1a;letter-spacing:-0.45px;">Meta (XML)</div>
<div class="t" style="right:529.50px;top:119.33px;font-size:7px;line-height:8.40px;color:#1a1a1a;letter-spacing:-0.32px;text-align:right;">13.83 KB</div>
<div class="t" style="left:478.20px;top:119.33px;font-size:7px;line-height:8.40px;color:#1a1a1a;letter-spacing:-0.42px;">Compressed;</div>
<div class="t" style="left:553.10px;top:119.33px;font-size:7px;line-height:8.40px;color:#1a1a1a;letter-spacing:-0.32px;">No</div>
<div class="t" style="left:324.00px;top:129.68px;font-size:7px;line-height:8.40px;color:#1a1a1a;letter-spacing:-0.3px;">networkshop.meta</div>
<div class="t" style="left:403.30px;top:129.68px;font-size:7px;line-height:8.40px;color:#1a1a1a;letter-spacing:-0.45px;">Meta (XML)</div>
<div class="t" style="right:529.50px;top:129.68px;font-size:7px;line-height:8.40px;color:#1a1a1a;letter-spacing:-0.32px;text-align:right;">1.37 KB</div>
<div class="t" style="left:478.20px;top:129.68px;font-size:7px;line-height:8.40px;color:#1a1a1a;letter-spacing:-0.42px;">Compressed;Encrypted;</div>
<div class="t" style="left:553.10px;top:129.68px;font-size:7px;line-height:8.40px;color:#1a1a1a;letter-spacing:-0.32px;">No</div>
<div class="t" style="left:324.00px;top:140.03px;font-size:7px;line-height:8.40px;color:#1a1a1a;letter-spacing:-0.3px;">pedhealth.meta</div>
<div class="t" style="left:403.30px;top:140.03px;font-size:7px;line-height:8.40px;color:#1a1a1a;letter-spacing:-0.45px;">Meta (XML)</div>
<div class="t" style="right:529.50px;top:140.03px;font-size:7px;line-height:8.40px;color:#1a1a1a;letter-spacing:-0.32px;text-align:right;">5.472 KB</div>
<div class="t" style="left:478.20px;top:140.03px;font-size:7px;line-height:8.40px;color:#1a1a1a;letter-spacing:-0.42px;">Compressed;</div>
<div class="t" style="left:553.10px;top:140.03px;font-size:7px;line-height:8.40px;color:#1a1a1a;letter-spacing:-0.32px;">No</div>
<div class="t" style="left:324.00px;top:150.38px;font-size:7px;line-height:8.40px;color:#1a1a1a;letter-spacing:-0.3px;">pedperception.meta</div>
<div class="t" style="left:403.30px;top:150.38px;font-size:7px;line-height:8.40px;color:#1a1a1a;letter-spacing:-0.45px;">Meta (XML)</div>
<div class="t" style="right:529.50px;top:150.38px;font-size:7px;line-height:8.40px;color:#1a1a1a;letter-spacing:-0.32px;text-align:right;">4.059 KB</div>
<div class="t" style="left:478.20px;top:150.38px;font-size:7px;line-height:8.40px;color:#1a1a1a;letter-spacing:-0.42px;">Compressed;</div>
<div class="t" style="left:553.10px;top:150.38px;font-size:7px;line-height:8.40px;color:#1a1a1a;letter-spacing:-0.32px;">No</div>
<div class="t" style="left:324.00px;top:160.73px;font-size:7px;line-height:8.40px;color:#1a1a1a;letter-spacing:-0.3px;">pedpersonality.meta</div>
<div class="t" style="left:403.30px;top:160.73px;font-size:7px;line-height:8.40px;color:#1a1a1a;letter-spacing:-0.45px;">Meta (XML)</div>
<div class="t" style="right:529.50px;top:160.73px;font-size:7px;line-height:8.40px;color:#1a1a1a;letter-spacing:-0.32px;text-align:right;">302.9 KB</div>
<div class="t" style="left:478.20px;top:160.73px;font-size:7px;line-height:8.40px;color:#1a1a1a;letter-spacing:-0.42px;">Compressed;</div>
<div class="t" style="left:553.10px;top:160.73px;font-size:7px;line-height:8.40px;color:#1a1a1a;letter-spacing:-0.32px;">No</div>
<div class="t" style="left:324.00px;top:171.08px;font-size:7px;line-height:8.40px;color:#1a1a1a;letter-spacing:-0.3px;">pickups.meta</div>
<div class="t" style="left:403.30px;top:171.08px;font-size:7px;line-height:8.40px;color:#1a1a1a;letter-spacing:-0.45px;">Meta (XML)</div>
<div class="t" style="right:529.50px;top:171.08px;font-size:7px;line-height:8.40px;color:#1a1a1a;letter-spacing:-0.32px;text-align:right;">130.5 KB</div>
<div class="t" style="left:478.20px;top:171.08px;font-size:7px;line-height:8.40px;color:#1a1a1a;letter-spacing:-0.42px;">Compressed;Encrypted;</div>
<div class="t" style="left:553.10px;top:171.08px;font-size:7px;line-height:8.40px;color:#1a1a1a;letter-spacing:-0.32px;">No</div>
<div class="t" style="left:324.00px;top:181.43px;font-size:7px;line-height:8.40px;color:#1a1a1a;letter-spacing:-0.3px;">scriptmetadata.meta</div>
<div class="t" style="left:403.30px;top:181.43px;font-size:7px;line-height:8.40px;color:#1a1a1a;letter-spacing:-0.45px;">Meta (XML)</div>
<div class="t" style="right:529.50px;top:181.43px;font-size:7px;line-height:8.40px;color:#1a1a1a;letter-spacing:-0.32px;text-align:right;">6.275 MB</div>
<div class="t" style="left:478.20px;top:181.43px;font-size:7px;line-height:8.40px;color:#1a1a1a;letter-spacing:-0.42px;">Compressed;Encrypted;</div>
<div class="t" style="left:553.10px;top:181.43px;font-size:7px;line-height:8.40px;color:#1a1a1a;letter-spacing:-0.32px;">No</div>
<div class="t" style="left:324.00px;top:191.78px;font-size:7px;line-height:8.40px;color:#1a1a1a;letter-spacing:-0.3px;">shop_vehicle.meta</div>
<div class="t" style="left:403.30px;top:191.78px;font-size:7px;line-height:8.40px;color:#1a1a1a;letter-spacing:-0.45px;">Meta (XML)</div>
<div class="t" style="right:529.50px;top:191.78px;font-size:7px;line-height:8.40px;color:#1a1a1a;letter-spacing:-0.32px;text-align:right;">4.241 KB</div>
<div class="t" style="left:478.20px;top:191.78px;font-size:7px;line-height:8.40px;color:#1a1a1a;letter-spacing:-0.42px;">Compressed;Encrypted;</div>
<div class="t" style="left:553.10px;top:191.78px;font-size:7px;line-height:8.40px;color:#1a1a1a;letter-spacing:-0.32px;">No</div>
<div class="t" style="left:324.00px;top:202.13px;font-size:7px;line-height:8.40px;color:#1a1a1a;letter-spacing:-0.3px;">taskdata.meta</div>
<div class="t" style="left:403.30px;top:202.13px;font-size:7px;line-height:8.40px;color:#1a1a1a;letter-spacing:-0.45px;">Meta (XML)</div>
<div class="t" style="right:529.50px;top:202.13px;font-size:7px;line-height:8.40px;color:#1a1a1a;letter-spacing:-0.32px;text-align:right;">8.742 KB</div>
<div class="t" style="left:478.20px;top:202.13px;font-size:7px;line-height:8.40px;color:#1a1a1a;letter-spacing:-0.42px;">Compressed;Encrypted;</div>
<div class="t" style="left:553.10px;top:202.13px;font-size:7px;line-height:8.40px;color:#1a1a1a;letter-spacing:-0.32px;">No</div>
<div class="t" style="left:324.00px;top:212.48px;font-size:7px;line-height:8.40px;color:#1a1a1a;letter-spacing:-0.3px;">textpatch.meta</div>
<div class="t" style="left:403.30px;top:212.48px;font-size:7px;line-height:8.40px;color:#1a1a1a;letter-spacing:-0.45px;">Meta (XML)</div>
<div class="t" style="right:529.50px;top:212.48px;font-size:7px;line-height:8.40px;color:#1a1a1a;letter-spacing:-0.32px;text-align:right;">192 bytes</div>
<div class="t" style="left:478.20px;top:212.48px;font-size:7px;line-height:8.40px;color:#1a1a1a;letter-spacing:-0.42px;">Compressed;Encrypted;</div>
<div class="t" style="left:553.10px;top:212.48px;font-size:7px;line-height:8.40px;color:#1a1a1a;letter-spacing:-0.32px;">No</div>
<div class="t" style="left:324.00px;top:222.83px;font-size:7px;line-height:8.40px;color:#1a1a1a;letter-spacing:-0.3px;">tunableobjects.meta</div>
<div class="t" style="left:403.30px;top:222.83px;font-size:7px;line-height:8.40px;color:#1a1a1a;letter-spacing:-0.45px;">Meta (XML)</div>
<div class="t" style="right:529.50px;top:222.83px;font-size:7px;line-height:8.40px;color:#1a1a1a;letter-spacing:-0.32px;text-align:right;">30.01 KB</div>
<div class="t" style="left:478.20px;top:222.83px;font-size:7px;line-height:8.40px;color:#1a1a1a;letter-spacing:-0.42px;">Compressed;Encrypted;</div>
<div class="t" style="left:553.10px;top:222.83px;font-size:7px;line-height:8.40px;color:#1a1a1a;letter-spacing:-0.32px;">No</div>
<div class="t" style="left:324.00px;top:233.18px;font-size:7px;line-height:8.40px;color:#1a1a1a;letter-spacing:-0.3px;">weaponarchetypes.meta</div>
<div class="t" style="left:403.30px;top:233.18px;font-size:7px;line-height:8.40px;color:#1a1a1a;letter-spacing:-0.45px;">Meta (XML)</div>
<div class="t" style="right:529.50px;top:233.18px;font-size:7px;line-height:8.40px;color:#1a1a1a;letter-spacing:-0.32px;text-align:right;">15.49 KB</div>
<div class="t" style="left:478.20px;top:233.18px;font-size:7px;line-height:8.40px;color:#1a1a1a;letter-spacing:-0.42px;">Compressed;Encrypted;</div>
<div class="t" style="left:553.10px;top:233.18px;font-size:7px;line-height:8.40px;color:#1a1a1a;letter-spacing:-0.32px;">No</div>
<div class="t" style="left:319.00px;top:245.51px;font-size:7px;line-height:8.40px;color:#2244a8;letter-spacing:-0.3px;">Plain text (1)</div>
<div class="t" style="left:324.00px;top:257.43px;font-size:7px;line-height:8.40px;color:#1a1a1a;letter-spacing:-0.3px;">version.txt</div>
<div class="t" style="left:403.30px;top:257.43px;font-size:7px;line-height:8.40px;color:#1a1a1a;letter-spacing:-0.45px;">Plain text</div>
<div class="t" style="right:529.50px;top:257.43px;font-size:7px;line-height:8.40px;color:#1a1a1a;letter-spacing:-0.32px;text-align:right;">431 bytes</div>
<div class="t" style="left:478.20px;top:257.43px;font-size:7px;line-height:8.40px;color:#1a1a1a;letter-spacing:-0.42px;">Compressed;Encrypted;</div>
<div class="t" style="left:553.10px;top:257.43px;font-size:7px;line-height:8.40px;color:#1a1a1a;letter-spacing:-0.32px;">No</div>
<div class="t" style="left:319.00px;top:269.76px;font-size:7px;line-height:8.40px;color:#2244a8;letter-spacing:-0.3px;">XML text (12)</div>
<div class="t" style="left:324.00px;top:281.68px;font-size:7px;line-height:8.40px;color:#1a1a1a;letter-spacing:-0.3px;">cloudkeyframes.xml</div>
<div class="t" style="left:403.30px;top:281.68px;font-size:7px;line-height:8.40px;color:#1a1a1a;letter-spacing:-0.45px;">XML text</div>
<div class="t" style="right:529.50px;top:281.68px;font-size:7px;line-height:8.40px;color:#1a1a1a;letter-spacing:-0.32px;text-align:right;">105.4 KB</div>
<div class="t" style="left:478.20px;top:281.68px;font-size:7px;line-height:8.40px;color:#1a1a1a;letter-spacing:-0.42px;">Compressed;Encrypted;</div>
<div class="t" style="left:553.10px;top:281.68px;font-size:7px;line-height:8.40px;color:#1a1a1a;letter-spacing:-0.32px;">No</div>
<div class="t" style="left:324.00px;top:292.03px;font-size:7px;line-height:8.40px;color:#1a1a1a;letter-spacing:-0.3px;">dlclist.xml</div>
<div class="t" style="left:403.30px;top:292.03px;font-size:7px;line-height:8.40px;color:#1a1a1a;letter-spacing:-0.45px;">XML text</div>
<div class="t" style="right:529.50px;top:292.03px;font-size:7px;line-height:8.40px;color:#1a1a1a;letter-spacing:-0.32px;text-align:right;">2.245 KB</div>
<div class="t" style="left:478.20px;top:292.03px;font-size:7px;line-height:8.40px;color:#1a1a1a;letter-spacing:-0.42px;">Compressed;</div>
<div class="t" style="left:553.10px;top:292.03px;font-size:7px;line-height:8.40px;color:#1a1a1a;letter-spacing:-0.32px;">No</div>
<div class="t" style="left:324.00px;top:302.38px;font-size:7px;line-height:8.40px;color:#1a1a1a;letter-spacing:-0.3px;">gameconfig.xml</div>
<div class="t" style="left:403.30px;top:302.38px;font-size:7px;line-height:8.40px;color:#1a1a1a;letter-spacing:-0.45px;">XML text</div>
<div class="t" style="right:529.50px;top:302.38px;font-size:7px;line-height:8.40px;color:#1a1a1a;letter-spacing:-0.32px;text-align:right;">58.4 KB</div>
<div class="t" style="left:478.20px;top:302.38px;font-size:7px;line-height:8.40px;color:#1a1a1a;letter-spacing:-0.42px;">Compressed;</div>
<div class="t" style="left:553.10px;top:302.38px;font-size:7px;line-height:8.40px;color:#1a1a1a;letter-spacing:-0.32px;">No</div>
<div class="t" style="left:324.00px;top:312.73px;font-size:7px;line-height:8.40px;color:#1a1a1a;letter-spacing:-0.3px;">hbaosettings.xml</div>
<div class="t" style="left:403.30px;top:312.73px;font-size:7px;line-height:8.40px;color:#1a1a1a;letter-spacing:-0.45px;">XML text</div>
<div class="t" style="right:529.50px;top:312.73px;font-size:7px;line-height:8.40px;color:#1a1a1a;letter-spacing:-0.32px;text-align:right;">599 bytes</div>
<div class="t" style="left:478.20px;top:312.73px;font-size:7px;line-height:8.40px;color:#1a1a1a;letter-spacing:-0.42px;">Compressed;Encrypted;</div>
<div class="t" style="left:553.10px;top:312.73px;font-size:7px;line-height:8.40px;color:#1a1a1a;letter-spacing:-0.32px;">No</div>
<div class="t" style="left:324.00px;top:323.08px;font-size:7px;line-height:8.40px;color:#1a1a1a;letter-spacing:-0.3px;">mpstatssetup.xml</div>
<div class="t" style="left:403.30px;top:323.08px;font-size:7px;line-height:8.40px;color:#1a1a1a;letter-spacing:-0.45px;">XML text</div>
<div class="t" style="right:529.50px;top:323.08px;font-size:7px;line-height:8.40px;color:#1a1a1a;letter-spacing:-0.32px;text-align:right;">1.629 MB</div>
<div class="t" style="left:478.20px;top:323.08px;font-size:7px;line-height:8.40px;color:#1a1a1a;letter-spacing:-0.42px;">Compressed;Encrypted;</div>
<div class="t" style="left:553.10px;top:323.08px;font-size:7px;line-height:8.40px;color:#1a1a1a;letter-spacing:-0.32px;">No</div>
<div class="t" style="left:324.00px;top:333.43px;font-size:7px;line-height:8.40px;color:#1a1a1a;letter-spacing:-0.3px;">pedbounds.xml</div>
<div class="t" style="left:403.30px;top:333.43px;font-size:7px;line-height:8.40px;color:#1a1a1a;letter-spacing:-0.45px;">XML text</div>
<div class="t" style="right:529.50px;top:333.43px;font-size:7px;line-height:8.40px;color:#1a1a1a;letter-spacing:-0.32px;text-align:right;">45.72 KB</div>
<div class="t" style="left:478.20px;top:333.43px;font-size:7px;line-height:8.40px;color:#1a1a1a;letter-spacing:-0.42px;">Compressed;</div>
<div class="t" style="left:553.10px;top:333.43px;font-size:7px;line-height:8.40px;color:#1a1a1a;letter-spacing:-0.32px;">No</div>
<div class="t" style="left:324.00px;top:343.78px;font-size:7px;line-height:8.40px;color:#1a1a1a;letter-spacing:-0.3px;">playercardsetup.xml</div>
<div class="t" style="left:403.30px;top:343.78px;font-size:7px;line-height:8.40px;color:#1a1a1a;letter-spacing:-0.45px;">XML text</div>
<div class="t" style="right:529.50px;top:343.78px;font-size:7px;line-height:8.40px;color:#1a1a1a;letter-spacing:-0.32px;text-align:right;">19.2 KB</div>
<div class="t" style="left:478.20px;top:343.78px;font-size:7px;line-height:8.40px;color:#1a1a1a;letter-spacing:-0.42px;">Compressed;Encrypted;</div>
<div class="t" style="left:553.10px;top:343.78px;font-size:7px;line-height:8.40px;color:#1a1a1a;letter-spacing:-0.32px;">No</div>
<div class="t" style="left:324.00px;top:354.13px;font-size:7px;line-height:8.40px;color:#1a1a1a;letter-spacing:-0.3px;">playerxlast.xml</div>
<div class="t" style="left:403.30px;top:354.13px;font-size:7px;line-height:8.40px;color:#1a1a1a;letter-spacing:-0.45px;">XML text</div>
<div class="t" style="right:529.50px;top:354.13px;font-size:7px;line-height:8.40px;color:#1a1a1a;letter-spacing:-0.32px;text-align:right;">962 KB</div>
<div class="t" style="left:478.20px;top:354.13px;font-size:7px;line-height:8.40px;color:#1a1a1a;letter-spacing:-0.42px;">Compressed;Encrypted;</div>
<div class="t" style="left:553.10px;top:354.13px;font-size:7px;line-height:8.40px;color:#1a1a1a;letter-spacing:-0.32px;">No</div>
<div class="t" style="left:324.00px;top:364.48px;font-size:7px;line-height:8.40px;color:#1a1a1a;letter-spacing:-0.3px;">scaleformpreallocation.xml</div>
<div class="t" style="left:403.30px;top:364.48px;font-size:7px;line-height:8.40px;color:#1a1a1a;letter-spacing:-0.45px;">XML text</div>
<div class="t" style="right:529.50px;top:364.48px;font-size:7px;line-height:8.40px;color:#1a1a1a;letter-spacing:-0.32px;text-align:right;">143.1 KB</div>
<div class="t" style="left:478.20px;top:364.48px;font-size:7px;line-height:8.40px;color:#1a1a1a;letter-spacing:-0.42px;">Compressed;Encrypted;</div>
<div class="t" style="left:553.10px;top:364.48px;font-size:7px;line-height:8.40px;color:#1a1a1a;letter-spacing:-0.32px;">No</div>
<div class="t" style="left:324.00px;top:374.83px;font-size:7px;line-height:8.40px;color:#1a1a1a;letter-spacing:-0.3px;">spstatssetup.xml</div>
<div class="t" style="left:403.30px;top:374.83px;font-size:7px;line-height:8.40px;color:#1a1a1a;letter-spacing:-0.45px;">XML text</div>
<div class="t" style="right:529.50px;top:374.83px;font-size:7px;line-height:8.40px;color:#1a1a1a;letter-spacing:-0.32px;text-align:right;">424.4 KB</div>
<div class="t" style="left:478.20px;top:374.83px;font-size:7px;line-height:8.40px;color:#1a1a1a;letter-spacing:-0.42px;">Compressed;Encrypted;</div>
<div class="t" style="left:553.10px;top:374.83px;font-size:7px;line-height:8.40px;color:#1a1a1a;letter-spacing:-0.32px;">No</div>
<div class="t" style="left:324.00px;top:385.18px;font-size:7px;line-height:8.40px;color:#1a1a1a;letter-spacing:-0.3px;">tvplaylists.xml</div>
<div class="t" style="left:403.30px;top:385.18px;font-size:7px;line-height:8.40px;color:#1a1a1a;letter-spacing:-0.45px;">XML text</div>
<div class="t" style="right:529.50px;top:385.18px;font-size:7px;line-height:8.40px;color:#1a1a1a;letter-spacing:-0.32px;text-align:right;">18.8 KB</div>
<div class="t" style="left:478.20px;top:385.18px;font-size:7px;line-height:8.40px;color:#1a1a1a;letter-spacing:-0.42px;">Compressed;Encrypted;</div>
<div class="t" style="left:553.10px;top:385.18px;font-size:7px;line-height:8.40px;color:#1a1a1a;letter-spacing:-0.32px;">No</div>
<div class="t" style="left:324.00px;top:395.53px;font-size:7px;line-height:8.40px;color:#1a1a1a;letter-spacing:-0.3px;">tvplaylists_x64.xml</div>
<div class="t" style="left:403.30px;top:395.53px;font-size:7px;line-height:8.40px;color:#1a1a1a;letter-spacing:-0.45px;">XML text</div>
<div class="t" style="right:529.50px;top:395.53px;font-size:7px;line-height:8.40px;color:#1a1a1a;letter-spacing:-0.32px;text-align:right;">18.8 KB</div>
<div class="t" style="left:478.20px;top:395.53px;font-size:7px;line-height:8.40px;color:#1a1a1a;letter-spacing:-0.42px;">Compressed;Encrypted;</div>
<div class="t" style="left:553.10px;top:395.53px;font-size:7px;line-height:8.40px;color:#1a1a1a;letter-spacing:-0.32px;">No</div>
</div>
<div style="position:absolute;left:399.70px;top:77.00px;width:1.00px;height:13.00px;background:#e5e5e5;"></div>
<div style="position:absolute;left:438.70px;top:77.00px;width:1.00px;height:13.00px;background:#e5e5e5;"></div>
<div style="position:absolute;left:474.30px;top:77.00px;width:1.00px;height:13.00px;background:#e5e5e5;"></div>
<div style="position:absolute;left:549.50px;top:77.00px;width:1.00px;height:13.00px;background:#e5e5e5;"></div>
<div style="position:absolute;left:607.30px;top:77.00px;width:1.00px;height:13.00px;background:#e5e5e5;"></div>
<div class="t" style="left:315.00px;top:80.38px;font-size:7px;line-height:8.40px;color:#1a1a1a;letter-spacing:-0.45px;">Name</div>
<div class="t" style="left:403.30px;top:80.38px;font-size:7px;line-height:8.40px;color:#1a1a1a;letter-spacing:-0.32px;">Type</div>
<div class="t" style="right:529.00px;top:80.38px;font-size:7px;line-height:8.40px;color:#1a1a1a;letter-spacing:-0.32px;text-align:right;">Size</div>
<div class="t" style="left:478.20px;top:80.38px;font-size:7px;line-height:8.40px;color:#1a1a1a;letter-spacing:-0.32px;">Attributes</div>
<div class="t" style="left:553.10px;top:80.38px;font-size:7px;line-height:8.40px;color:#1a1a1a;letter-spacing:-0.32px;">Tags</div>
<div style="position:absolute;left:740.00px;top:77.00px;width:9.00px;height:417.00px;background:#f0f0f0;"></div>
<div style="position:absolute;left:740.00px;top:155.00px;width:9.00px;height:316.00px;background:#cdcdcd;"></div>
<svg width="1000" height="585" viewBox="0 0 1000 585" style="left:0;top:0"><path d="M742.3 84.2 L744.5 81.8 L746.7 84.2" stroke="#555" stroke-width="1" fill="none"/><path d="M742.3 487.8 L744.5 490.2 L746.7 487.8" stroke="#555" stroke-width="1" fill="none"/></svg>
<div style="position:absolute;left:86.00px;top:494.00px;width:663.00px;height:1.00px;background:#e2e2e2;"></div>
<div class="t" style="left:88.00px;top:496.68px;font-size:7px;line-height:8.40px;color:#1a1a1a;letter-spacing:-0.4px;">41 items shown</div>
<div style="position:absolute;left:132.50px;top:496.00px;width:1.00px;height:9.00px;background:#cfcfcf;"></div>
<div class="t" style="left:136.00px;top:496.68px;font-size:7px;line-height:8.40px;color:#1a1a1a;letter-spacing:-0.35px;">Selected: 1</div>
<div class="t" style="left:576.80px;top:496.68px;font-size:7px;line-height:8.40px;color:#1a1a1a;letter-spacing:-0.35px;">RPF Archive</div>
<div style="position:absolute;left:615.50px;top:496.00px;width:1.00px;height:9.00px;background:#cfcfcf;"></div>
<div class="t" style="left:619.00px;top:496.68px;font-size:7px;line-height:8.40px;color:#1a1a1a;letter-spacing:-0.35px;">Grand Theft Auto V</div>
<div style="position:absolute;left:675.30px;top:496.00px;width:1.00px;height:9.00px;background:#cfcfcf;"></div>
<div class="t" style="left:678.00px;top:496.68px;font-size:7px;line-height:8.40px;color:#1a1a1a;letter-spacing:-0.35px;">Windows</div>
<div style="position:absolute;left:705.30px;top:496.00px;width:1.00px;height:9.00px;background:#cfcfcf;"></div>
<div class="t" style="left:711.80px;top:496.68px;font-size:7px;line-height:8.40px;color:#1a1a1a;letter-spacing:-0.35px;">OpenIV 2.9</div>
</body></html>
